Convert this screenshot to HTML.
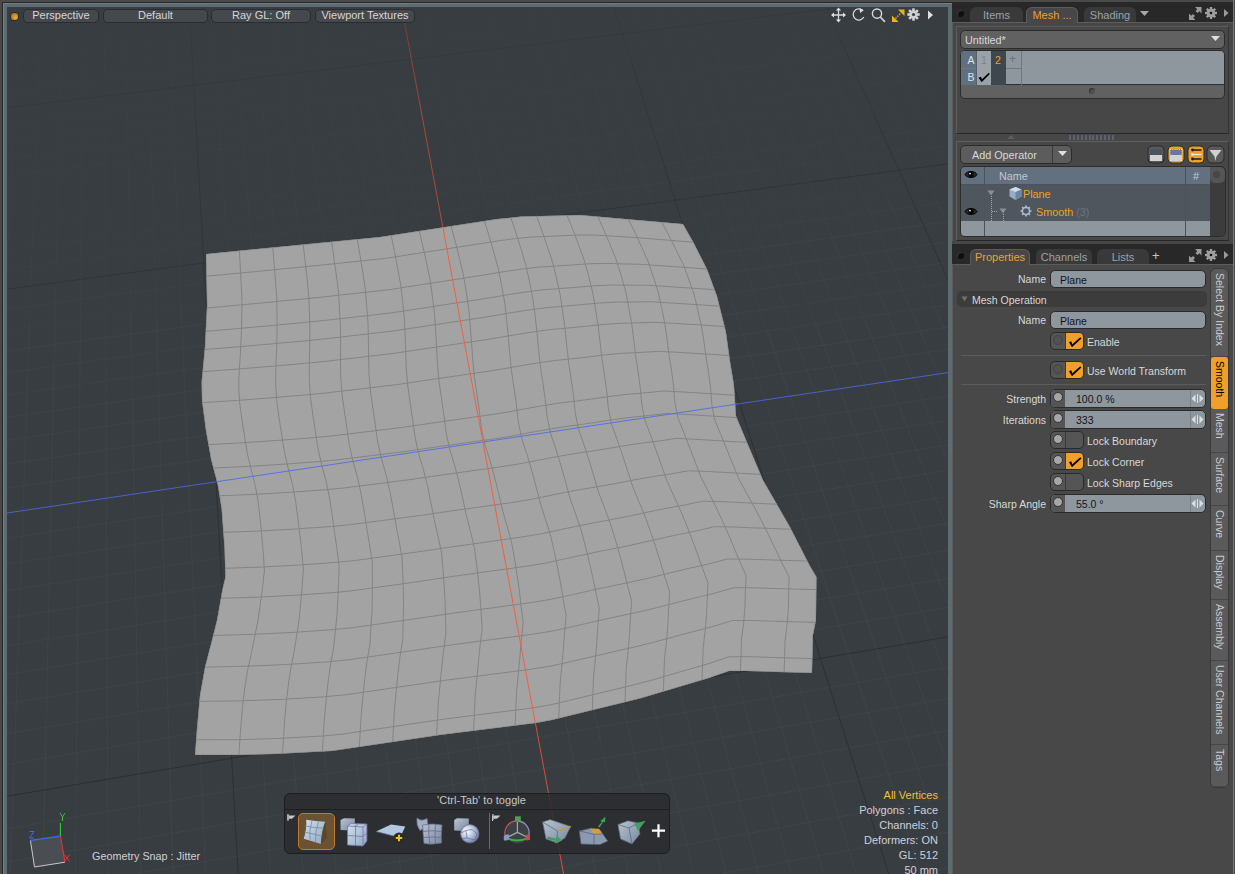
<!DOCTYPE html><html><head><meta charset="utf-8"><style>
*{margin:0;padding:0;box-sizing:border-box}
html,body{width:1235px;height:874px;overflow:hidden;background:#474747;font-family:"Liberation Sans",sans-serif;font-size:11px;color:#d8d8d8}
.a{position:absolute}
.t{position:absolute;white-space:nowrap;line-height:13px}
</style></head><body>
<div class="a" style="left:0;top:0;width:1235px;height:2px;background:#4a4a4a"></div>
<div class="a" style="left:0;top:2px;width:2px;height:872px;background:#484848"></div>
<div class="a" style="left:2px;top:2px;width:950px;height:1px;background:#262626"></div>
<div class="a" style="left:2px;top:2px;width:1px;height:872px;background:#262626"></div>
<div class="a" style="left:3px;top:3px;width:949px;height:871px;background:#5e6b73;border-top:1px solid #72808a;border-left:1px solid #72808a"></div>
<div class="a" style="left:7px;top:7px;width:941px;height:867px;background:#383d42;overflow:hidden">
<svg width="941" height="867" viewBox="7 7 941 867" style="position:absolute;left:0;top:0">
<path d="M-2127.1 1488.8L-1720.1 919.9M-2080.1 1479.9L-1682.6 914.0M-2033.3 1471.0L-1645.3 908.0M-1986.8 1462.2L-1608.1 902.1M-1940.5 1453.4L-1571.2 896.3M-1894.6 1444.7L-1534.4 890.4M-1848.9 1436.0L-1497.8 884.6M-1803.4 1427.4L-1461.3 878.8M-1758.2 1418.8L-1425.0 873.1M-1668.6 1401.8L-1353.0 861.7M-1624.2 1393.3L-1317.2 856.0M-1580.0 1384.9L-1281.6 850.3M-1536.1 1376.6L-1246.2 844.7M-1492.4 1368.3L-1210.9 839.1M-1449.0 1360.0L-1175.8 833.5M-1405.8 1351.8L-1140.9 828.0M-1362.9 1343.7L-1106.1 822.5M-1320.2 1335.6L-1071.5 817.0M-1235.5 1319.5L-1002.7 806.1M-1193.5 1311.5L-968.5 800.6M-1151.7 1303.6L-934.5 795.2M-1110.2 1295.7L-900.7 789.9M-1068.8 1287.8L-867.0 784.5M-1027.7 1280.0L-833.4 779.2M-986.9 1272.3L-800.0 773.9M-946.2 1264.5L-766.8 768.6M-905.8 1256.9L-733.7 763.4M-825.6 1241.6L-668.0 752.9M-785.8 1234.1L-635.3 747.8M-746.3 1226.6L-602.8 742.6M-706.9 1219.1L-570.4 737.5M-667.8 1211.6L-538.2 732.3M-628.8 1204.2L-506.1 727.3M-590.1 1196.9L-474.2 722.2M-551.6 1189.6L-442.4 717.1M-513.2 1182.3L-410.8 712.1M-437.2 1167.9L-347.9 702.1M-399.5 1160.7L-316.6 697.2M-361.9 1153.6L-285.5 692.2M-324.6 1146.5L-254.5 687.3M-287.5 1139.4L-223.7 682.4M-250.5 1132.4L-193.0 677.6M-213.8 1125.4L-162.4 672.7M-177.2 1118.5L-132.0 667.9M-140.8 1111.6L-101.6 663.1M-68.6 1097.8L-41.4 653.5M-32.8 1091.0L-11.5 648.8M2.9 1084.3L18.3 644.0M38.3 1077.5L48.0 639.3M73.6 1070.8L77.5 634.6M108.7 1064.2L107.0 630.0M143.7 1057.5L136.3 625.3M178.4 1050.9L165.4 620.7M213.0 1044.3L194.5 616.1M281.7 1031.3L252.2 606.9M315.7 1024.8L280.9 602.3M349.6 1018.4L309.5 597.8M383.4 1012.0L338.0 593.3M416.9 1005.6L366.3 588.8M450.3 999.3L394.5 584.3M483.6 993.0L422.6 579.9M516.7 986.7L450.6 575.4M549.6 980.4L478.5 571.0M614.9 968.0L533.9 562.2M647.4 961.8L561.4 557.8M679.7 955.7L588.8 553.5M711.8 949.6L616.1 549.2M743.7 943.5L643.3 544.8M775.6 937.5L670.4 540.5M807.2 931.5L697.4 536.3M838.7 925.5L724.3 532.0M870.1 919.5L751.0 527.7M932.4 907.7L804.2 519.3M963.3 901.8L830.6 515.1M994.1 896.0L857.0 510.9M1024.7 890.2L883.2 506.8M1055.2 884.4L909.3 502.6M1085.6 878.6L935.3 498.5M1115.8 872.9L961.3 494.4M1145.8 867.2L987.1 490.3M1175.7 861.5L1012.8 486.2M1235.2 850.2L1063.9 478.1M1264.7 844.6L1089.3 474.1M1294.0 839.0L1114.6 470.0M1323.3 833.5L1139.8 466.0M1352.4 827.9L1165.0 462.1M1381.4 822.4L1190.0 458.1M1410.2 816.9L1214.9 454.1M1438.9 811.5L1239.7 450.2M1467.5 806.1L1264.4 446.3M1524.2 795.3L1313.6 438.5M1552.4 789.9L1338.0 434.6M1580.5 784.6L1362.4 430.7M1608.4 779.3L1386.6 426.9M1636.2 774.0L1410.8 423.0M1663.9 768.8L1434.9 419.2M1691.5 763.5L1458.8 415.4M1718.9 758.3L1482.7 411.6M1746.2 753.1L1506.5 407.8M1800.5 742.8L1553.8 400.3M1827.5 737.7L1577.4 396.6M1854.3 732.6L1600.8 392.9M1881.0 727.5L1624.1 389.2M1907.6 722.5L1647.4 385.5M1934.1 717.4L1670.6 381.8M1960.5 712.4L1693.7 378.1M1986.8 707.4L1716.7 374.5M2012.9 702.5L1739.6 370.9M2064.8 692.6L1785.2 363.6M2090.7 687.7L1807.8 360.0M2116.3 682.8L1830.4 356.5M2141.9 678.0L1852.9 352.9M2167.4 673.1L1875.3 349.3M2192.8 668.3L1897.6 345.8M2218.0 663.5L1919.9 342.3M2243.2 658.7L1942.0 338.7M2268.2 654.0L1964.1 335.2M2318.0 644.5L2008.0 328.3M2342.7 639.8L2029.9 324.8M2367.3 635.1L2051.6 321.3M2391.8 630.5L2073.3 317.9M2416.2 625.9L2094.9 314.5M2440.6 621.2L2116.5 311.1M2464.8 616.6L2137.9 307.6M2488.9 612.1L2159.3 304.3M2512.9 607.5L2180.6 300.9M-2174.4 1497.8L2536.8 603.0M-2135.9 1444.9L2507.3 576.0M-2098.6 1393.7L2478.5 549.8M-2062.5 1344.2L2450.4 524.1M-2027.6 1296.3L2422.9 499.1M-1993.8 1249.9L2396.1 474.6M-1961.0 1204.9L2369.8 450.7M-1929.3 1161.4L2344.2 427.4M-1868.7 1078.2L2294.6 382.2M-1839.7 1038.4L2270.7 360.3M-1811.6 999.8L2247.2 338.9M-1784.3 962.3L2224.3 318.0" stroke="#4c5257" stroke-opacity="0.330" stroke-width="1" fill="none"/>
<path d="M-2174.4 1497.8L-1757.7 925.9M-1713.3 1410.2L-1388.9 867.4M-1277.7 1327.5L-1037.0 811.5M-865.6 1249.2L-700.8 758.1M-475.1 1175.1L-379.2 707.1M-104.6 1104.7L-71.5 658.3M247.4 1037.8L223.4 611.5M901.3 913.6L777.7 523.5M1205.5 855.8L1038.4 482.1M1495.9 800.7L1289.1 442.4M1773.4 747.9L1530.2 404.1M2038.9 697.5L1762.4 367.2M2293.1 649.2L1986.1 331.7M2536.8 603.0L2201.8 297.5M-1898.6 1119.2L2319.1 404.5" stroke="#25282b" stroke-opacity="0.620" stroke-width="1" fill="none"/>
<path d="M-1720.1 919.9L-1536.1 662.8M-1682.6 914.0L-1502.8 658.0M-1645.3 908.0L-1469.6 653.2M-1608.1 902.1L-1436.6 648.5M-1571.2 896.3L-1403.7 643.7M-1534.4 890.4L-1371.0 639.0M-1497.8 884.6L-1338.4 634.3M-1461.3 878.8L-1305.9 629.6M-1425.0 873.1L-1273.6 625.0M-1353.0 861.7L-1209.3 615.7M-1317.2 856.0L-1177.4 611.1M-1281.6 850.3L-1145.6 606.5M-1246.2 844.7L-1113.9 602.0M-1210.9 839.1L-1082.4 597.4M-1175.8 833.5L-1051.0 592.9M-1140.9 828.0L-1019.7 588.4M-1106.1 822.5L-988.6 583.9M-1071.5 817.0L-957.5 579.5M-1002.7 806.1L-895.9 570.6M-968.5 800.6L-865.3 566.2M-934.5 795.2L-834.8 561.8M-900.7 789.9L-804.4 557.4M-867.0 784.5L-774.1 553.0M-833.4 779.2L-744.0 548.7M-800.0 773.9L-714.0 544.4M-766.8 768.6L-684.1 540.1M-733.7 763.4L-654.3 535.8M-668.0 752.9L-595.2 527.3M-635.3 747.8L-565.8 523.0M-602.8 742.6L-536.5 518.8M-570.4 737.5L-507.3 514.6M-538.2 732.3L-478.2 510.4M-506.1 727.3L-449.3 506.2M-474.2 722.2L-420.5 502.1M-442.4 717.1L-391.8 498.0M-410.8 712.1L-363.2 493.8M-347.9 702.1L-306.3 485.6M-316.6 697.2L-278.1 481.6M-285.5 692.2L-249.9 477.5M-254.5 687.3L-221.9 473.5M-223.7 682.4L-194.0 469.5M-193.0 677.6L-166.1 465.5M-162.4 672.7L-138.4 461.5M-132.0 667.9L-110.8 457.5M-101.6 663.1L-83.3 453.5M-41.4 653.5L-28.7 445.7M-11.5 648.8L-1.5 441.7M18.3 644.0L25.6 437.8M48.0 639.3L52.5 434.0M77.5 634.6L79.4 430.1M107.0 630.0L106.1 426.2M136.3 625.3L132.8 422.4M165.4 620.7L159.3 418.6M194.5 616.1L185.8 414.8M252.2 606.9L238.4 407.2M280.9 602.3L264.5 403.4M309.5 597.8L290.6 399.7M338.0 593.3L316.6 395.9M366.3 588.8L342.4 392.2M394.5 584.3L368.2 388.5M422.6 579.9L393.8 384.8M450.6 575.4L419.4 381.1M478.5 571.0L444.9 377.4M533.9 562.2L495.5 370.2M561.4 557.8L520.7 366.5M588.8 553.5L545.8 362.9M616.1 549.2L570.8 359.3M643.3 544.8L595.7 355.7M670.4 540.5L620.5 352.1M697.4 536.3L645.2 348.6M724.3 532.0L669.9 345.0M751.0 527.7L694.4 341.5M804.2 519.3L743.2 334.5M830.6 515.1L767.5 331.0M857.0 510.9L791.7 327.5M883.2 506.8L815.7 324.0M909.3 502.6L839.8 320.6M935.3 498.5L863.7 317.1M961.3 494.4L887.5 313.7M987.1 490.3L911.3 310.3M1012.8 486.2L934.9 306.9M1063.9 478.1L982.0 300.1M1089.3 474.1L1005.4 296.7M1114.6 470.0L1028.7 293.3M1139.8 466.0L1051.9 290.0M1165.0 462.1L1075.1 286.7M1190.0 458.1L1098.2 283.3M1214.9 454.1L1121.2 280.0M1239.7 450.2L1144.1 276.7M1264.4 446.3L1166.9 273.4M1313.6 438.5L1212.3 266.9M1338.0 434.6L1234.9 263.6M1362.4 430.7L1257.4 260.4M1386.6 426.9L1279.8 257.2M1410.8 423.0L1302.2 254.0M1434.9 419.2L1324.5 250.7M1458.8 415.4L1346.6 247.6M1482.7 411.6L1368.8 244.4M1506.5 407.8L1390.8 241.2M1553.8 400.3L1434.6 234.9M1577.4 396.6L1456.5 231.7M1600.8 392.9L1478.2 228.6M1624.1 389.2L1499.8 225.5M1647.4 385.5L1521.4 222.4M1670.6 381.8L1542.9 219.3M1693.7 378.1L1564.4 216.2M1716.7 374.5L1585.7 213.1M1739.6 370.9L1607.0 210.0M1785.2 363.6L1649.4 203.9M1807.8 360.0L1670.5 200.9M1830.4 356.5L1691.5 197.9M1852.9 352.9L1712.4 194.9M1875.3 349.3L1733.2 191.9M1897.6 345.8L1754.0 188.9M1919.9 342.3L1774.8 185.9M1942.0 338.7L1795.4 182.9M1964.1 335.2L1816.0 179.9M2008.0 328.3L1856.9 174.1M2029.9 324.8L1877.3 171.1M2051.6 321.3L1897.6 168.2M2073.3 317.9L1917.8 165.3M2094.9 314.5L1938.0 162.4M2116.5 311.1L1958.1 159.5M2137.9 307.6L1978.1 156.6M2159.3 304.3L1998.1 153.7M2180.6 300.9L2018.0 150.8M-1757.7 925.9L2201.8 297.5M-1731.9 890.5L2179.8 277.5M-1706.8 856.0L2158.3 257.8M-1682.4 822.5L2137.2 238.6M-1658.6 789.8L2116.5 219.7M-1613.0 727.1L2076.4 183.1M-1591.0 697.0L2056.9 165.4" stroke="#4c5257" stroke-opacity="0.320" stroke-width="1" fill="none"/>
<path d="M-1757.7 925.9L-1569.6 667.6M-1388.9 867.4L-1241.4 620.3M-1037.0 811.5L-926.7 575.0M-700.8 758.1L-624.7 531.5M-379.2 707.1L-334.7 489.7M-71.5 658.3L-56.0 449.6M223.4 611.5L212.1 411.0M777.7 523.5L718.8 338.0M1038.4 482.1L958.5 303.5M1289.1 442.4L1189.6 270.2M1530.2 404.1L1412.8 238.0M1762.4 367.2L1628.2 207.0M1986.1 331.7L1836.5 177.0M2201.8 297.5L2037.8 148.0" stroke="#25282b" stroke-opacity="0.601" stroke-width="1" fill="none"/>
<path d="M-1536.1 662.8L-1438.9 526.9M-1502.8 658.0L-1407.8 522.7M-1469.6 653.2L-1376.8 518.5M-1436.6 648.5L-1345.9 514.3M-1403.7 643.7L-1315.1 510.1M-1371.0 639.0L-1284.5 505.9M-1338.4 634.3L-1254.0 501.8M-1305.9 629.6L-1223.6 497.6M-1273.6 625.0L-1193.3 493.5M-1209.3 615.7L-1133.1 485.3M-1177.4 611.1L-1103.2 481.2M-1145.6 606.5L-1073.4 477.2M-1113.9 602.0L-1043.7 473.1M-1082.4 597.4L-1014.1 469.1M-1051.0 592.9L-984.6 465.1M-1019.7 588.4L-955.3 461.1M-988.6 583.9L-926.1 457.1M-957.5 579.5L-897.0 453.2M-895.9 570.6L-839.1 445.3M-865.3 566.2L-810.3 441.4M-834.8 561.8L-781.7 437.5M-804.4 557.4L-753.1 433.6M-774.1 553.0L-724.7 429.7M-744.0 548.7L-696.3 425.8M-714.0 544.4L-668.1 422.0M-684.1 540.1L-640.0 418.2M-654.3 535.8L-612.0 414.4M-595.2 527.3L-556.3 406.8M-565.8 523.0L-528.6 403.0M-536.5 518.8L-501.0 399.2M-507.3 514.6L-473.6 395.5M-478.2 510.4L-446.2 391.8M-449.3 506.2L-418.9 388.1M-420.5 502.1L-391.7 384.4M-391.8 498.0L-364.7 380.7M-363.2 493.8L-337.7 377.0M-306.3 485.6L-284.1 369.7M-278.1 481.6L-257.4 366.1M-249.9 477.5L-230.9 362.5M-221.9 473.5L-204.4 358.9M-194.0 469.5L-178.0 355.3M-166.1 465.5L-151.8 351.7M-138.4 461.5L-125.6 348.1M-110.8 457.5L-99.5 344.6M-83.3 453.5L-73.5 341.0M-28.7 445.7L-21.9 334.0M-1.5 441.7L3.8 330.5M25.6 437.8L29.4 327.0M52.5 434.0L55.0 323.5M79.4 430.1L80.4 320.1M106.1 426.2L105.7 316.6M132.8 422.4L130.9 313.2M159.3 418.6L156.1 309.8M185.8 414.8L181.1 306.4M238.4 407.2L230.9 299.6M264.5 403.4L255.7 296.2M290.6 399.7L280.4 292.8M316.6 395.9L305.0 289.5M342.4 392.2L329.5 286.2M368.2 388.5L353.9 282.8M393.8 384.8L378.3 279.5M419.4 381.1L402.5 276.2M444.9 377.4L426.7 272.9M495.5 370.2L474.8 266.4M520.7 366.5L498.7 263.1M545.8 362.9L522.5 259.9M570.8 359.3L546.3 256.6M595.7 355.7L569.9 253.4M620.5 352.1L593.5 250.2M645.2 348.6L617.0 247.0M669.9 345.0L640.4 243.8M694.4 341.5L663.7 240.7M743.2 334.5L710.1 234.3M767.5 331.0L733.2 231.2M791.7 327.5L756.2 228.1M815.7 324.0L779.2 224.9M839.8 320.6L802.0 221.8M863.7 317.1L824.8 218.7M887.5 313.7L847.5 215.6M911.3 310.3L870.1 212.6M934.9 306.9L892.6 209.5M982.0 300.1L937.5 203.4M1005.4 296.7L959.8 200.3M1028.7 293.3L982.0 197.3M1051.9 290.0L1004.2 194.3M1075.1 286.7L1026.2 191.3M1098.2 283.3L1048.2 188.3M1121.2 280.0L1070.2 185.3M1144.1 276.7L1092.0 182.3M1166.9 273.4L1113.8 179.4M1212.3 266.9L1157.2 173.5M1234.9 263.6L1178.7 170.5M1257.4 260.4L1200.2 167.6M1279.8 257.2L1221.6 164.7M1302.2 254.0L1243.0 161.8M1324.5 250.7L1264.3 158.9M1346.6 247.6L1285.5 156.0M1368.8 244.4L1306.6 153.1M1390.8 241.2L1327.7 150.3M1434.6 234.9L1369.6 144.5M1456.5 231.7L1390.4 141.7M1478.2 228.6L1411.2 138.9M1499.8 225.5L1431.9 136.1M1521.4 222.4L1452.6 133.2M1542.9 219.3L1473.2 130.4M1564.4 216.2L1493.7 127.6M1585.7 213.1L1514.1 124.9M1607.0 210.0L1534.5 122.1M1649.4 203.9L1575.1 116.6M1670.5 200.9L1595.3 113.8M1691.5 197.9L1615.4 111.1M1712.4 194.9L1635.5 108.3M1733.2 191.9L1655.4 105.6M1754.0 188.9L1675.4 102.9M1774.8 185.9L1695.2 100.2M1795.4 182.9L1715.0 97.5M1816.0 179.9L1734.8 94.8M1856.9 174.1L1774.0 89.5M1877.3 171.1L1793.6 86.8M1897.6 168.2L1813.1 84.2M1917.8 165.3L1832.5 81.5M1938.0 162.4L1851.9 78.9M1958.1 159.5L1871.1 76.3M1978.1 156.6L1890.4 73.6M1998.1 153.7L1909.6 71.0M2018.0 150.8L1928.7 68.4M-1569.6 667.6L2037.8 148.0M-1548.7 639.0L2019.1 130.9M-1528.4 611.0L2000.8 114.2M-1508.5 583.8L1982.7 97.8M-1489.1 557.2L1965.1 81.6" stroke="#4c5257" stroke-opacity="0.253" stroke-width="1" fill="none"/>
<path d="M-1569.6 667.6L-1470.2 531.2M-1241.4 620.3L-1163.1 489.4M-926.7 575.0L-868.0 449.2M-624.7 531.5L-584.1 410.6M-334.7 489.7L-310.9 373.3M-56.0 449.6L-47.6 337.5M212.1 411.0L206.1 303.0M718.8 338.0L687.0 237.5M958.5 303.5L915.1 206.4M1189.6 270.2L1135.5 176.4M1412.8 238.0L1348.7 147.4M1628.2 207.0L1554.8 119.3M1836.5 177.0L1754.4 92.1M2037.8 148.0L1947.7 65.8" stroke="#25282b" stroke-opacity="0.475" stroke-width="1" fill="none"/>
<path d="M-1438.9 526.9L-1352.7 406.4M-1407.8 522.7L-1323.4 402.6M-1376.8 518.5L-1294.3 398.8M-1345.9 514.3L-1265.3 395.1M-1315.1 510.1L-1236.4 391.3M-1284.5 505.9L-1207.6 387.6M-1254.0 501.8L-1178.9 383.9M-1223.6 497.6L-1150.4 380.2M-1193.3 493.5L-1121.9 376.6M-1133.1 485.3L-1065.3 369.3M-1103.2 481.2L-1037.1 365.6M-1073.4 477.2L-1009.1 362.0M-1043.7 473.1L-981.1 358.4M-1014.1 469.1L-953.3 354.8M-984.6 465.1L-925.6 351.2M-955.3 461.1L-897.9 347.7M-926.1 457.1L-870.4 344.1M-897.0 453.2L-843.0 340.6M-839.1 445.3L-788.4 333.5M-810.3 441.4L-761.3 330.0M-781.7 437.5L-734.3 326.5M-753.1 433.6L-707.4 323.1M-724.7 429.7L-680.5 319.6M-696.3 425.8L-653.8 316.1M-668.1 422.0L-627.2 312.7M-640.0 418.2L-600.6 309.3M-612.0 414.4L-574.2 305.9M-556.3 406.8L-521.6 299.1M-528.6 403.0L-495.4 295.7M-501.0 399.2L-469.4 292.3M-473.6 395.5L-443.4 289.0M-446.2 391.8L-417.5 285.6M-418.9 388.1L-391.7 282.3M-391.7 384.4L-366.0 279.0M-364.7 380.7L-340.4 275.7M-337.7 377.0L-314.9 272.4M-284.1 369.7L-264.2 265.9M-257.4 366.1L-238.9 262.6M-230.9 362.5L-213.8 259.4M-204.4 358.9L-188.7 256.1M-178.0 355.3L-163.7 252.9M-151.8 351.7L-138.9 249.7M-125.6 348.1L-114.1 246.5M-99.5 344.6L-89.3 243.3M-73.5 341.0L-64.7 240.1M-21.9 334.0L-15.7 233.8M3.8 330.5L8.7 230.6M29.4 327.0L32.9 227.5M55.0 323.5L57.1 224.4M80.4 320.1L81.3 221.3M105.7 316.6L105.3 218.2M130.9 313.2L129.2 215.1M156.1 309.8L153.1 212.0M181.1 306.4L176.9 208.9M230.9 299.6L224.2 202.8M255.7 296.2L247.8 199.8M280.4 292.8L271.2 196.8M305.0 289.5L294.6 193.7M329.5 286.2L317.9 190.7M353.9 282.8L341.2 187.7M378.3 279.5L364.3 184.7M402.5 276.2L387.4 181.8M426.7 272.9L410.4 178.8M474.8 266.4L456.1 172.9M498.7 263.1L478.9 170.0M522.5 259.9L501.6 167.0M546.3 256.6L524.2 164.1M569.9 253.4L546.7 161.2M593.5 250.2L569.1 158.3M617.0 247.0L591.5 155.4M640.4 243.8L613.8 152.5M663.7 240.7L636.1 149.7M710.1 234.3L680.3 144.0M733.2 231.2L702.3 141.1M756.2 228.1L724.3 138.3M779.2 224.9L746.1 135.5M802.0 221.8L767.9 132.6M824.8 218.7L789.7 129.8M847.5 215.6L811.3 127.0M870.1 212.6L832.9 124.3M892.6 209.5L854.4 121.5M937.5 203.4L897.2 116.0M959.8 200.3L918.5 113.2M982.0 197.3L939.8 110.5M1004.2 194.3L960.9 107.7M1026.2 191.3L982.0 105.0M1048.2 188.3L1003.1 102.3M1070.2 185.3L1024.0 99.6M1092.0 182.3L1044.9 96.9M1113.8 179.4L1065.7 94.2M1157.2 173.5L1107.2 88.9M1178.7 170.5L1127.8 86.2M1200.2 167.6L1148.4 83.5M1221.6 164.7L1168.9 80.9M1243.0 161.8L1189.3 78.3M1264.3 158.9L1209.7 75.6M1285.5 156.0L1230.0 73.0M1306.6 153.1L1250.2 70.4M1327.7 150.3L1270.4 67.8M1369.6 144.5L1310.6 62.6M1390.4 141.7L1330.5 60.0M1411.2 138.9L1350.5 57.5M1431.9 136.1L1370.3 54.9M1452.6 133.2L1390.1 52.3M1473.2 130.4L1409.8 49.8M1493.7 127.6L1429.5 47.2M1514.1 124.9L1449.1 44.7M1534.5 122.1L1468.7 42.2M1575.1 116.6L1507.6 37.2M1595.3 113.8L1527.0 34.7M1615.4 111.1L1546.3 32.2M1635.5 108.3L1565.5 29.7M1655.4 105.6L1584.7 27.2M1675.4 102.9L1603.8 24.7M1695.2 100.2L1622.9 22.3M1715.0 97.5L1641.9 19.8M1734.8 94.8L1660.9 17.4M1774.0 89.5L1698.6 12.5M1793.6 86.8L1717.4 10.1M1813.1 84.2L1736.1 7.7M1832.5 81.5L1754.8 5.3M1851.9 78.9L1773.4 2.9M1871.1 76.3L1792.0 0.5M1890.4 73.6L1810.5 -1.9M1909.6 71.0L1828.9 -4.3M1928.7 68.4L1847.3 -6.7M-1470.2 531.2L1947.7 65.8M-1451.7 505.8L1930.7 50.3M-1416.1 456.9L1897.6 20.1M-1398.8 433.2L1881.5 5.4" stroke="#4c5257" stroke-opacity="0.201" stroke-width="1" fill="none"/>
<path d="M-1470.2 531.2L-1382.0 410.1M-1163.1 489.4L-1093.5 372.9M-868.0 449.2L-815.7 337.0M-584.1 410.6L-547.8 302.5M-310.9 373.3L-289.5 269.1M-47.6 337.5L-40.2 236.9M206.1 303.0L200.6 205.9M687.0 237.5L658.2 146.8M915.1 206.4L875.9 118.7M1135.5 176.4L1086.5 91.5M1348.7 147.4L1290.5 65.2M1554.8 119.3L1488.2 39.7M1754.4 92.1L1679.8 14.9M1947.7 65.8L1865.6 -9.0M-1433.7 481.1L1914.0 35.1" stroke="#25282b" stroke-opacity="0.378" stroke-width="1" fill="none"/>
<path d="M-1352.7 406.4L-1275.6 298.6M-1323.4 402.6L-1248.0 295.2M-1294.3 398.8L-1220.6 291.8M-1265.3 395.1L-1193.2 288.5M-1236.4 391.3L-1166.0 285.1M-1207.6 387.6L-1138.8 281.8M-1178.9 383.9L-1111.8 278.5M-1150.4 380.2L-1084.8 275.2M-1121.9 376.6L-1058.0 271.9M-1065.3 369.3L-1004.5 265.3M-1037.1 365.6L-978.0 262.1M-1009.1 362.0L-951.5 258.8M-981.1 358.4L-925.1 255.6M-953.3 354.8L-898.8 252.4M-925.6 351.2L-872.6 249.1M-897.9 347.7L-846.5 245.9M-870.4 344.1L-820.5 242.8M-843.0 340.6L-794.5 239.6M-788.4 333.5L-743.0 233.2M-761.3 330.0L-717.3 230.1M-734.3 326.5L-691.7 227.0M-707.4 323.1L-666.3 223.8M-680.5 319.6L-640.9 220.7M-653.8 316.1L-615.6 217.6M-627.2 312.7L-590.3 214.5M-600.6 309.3L-565.2 211.4M-574.2 305.9L-540.2 208.4M-521.6 299.1L-490.3 202.3M-495.4 295.7L-465.6 199.2M-469.4 292.3L-440.9 196.2M-443.4 289.0L-416.2 193.2M-417.5 285.6L-391.7 190.2M-391.7 282.3L-367.2 187.2M-366.0 279.0L-342.9 184.2M-340.4 275.7L-318.6 181.2M-314.9 272.4L-294.4 178.2M-264.2 265.9L-246.2 172.3M-238.9 262.6L-222.3 169.4M-213.8 259.4L-198.4 166.4M-188.7 256.1L-174.6 163.5M-163.7 252.9L-150.9 160.6M-138.9 249.7L-127.2 157.7M-114.1 246.5L-103.7 154.8M-89.3 243.3L-80.2 151.9M-64.7 240.1L-56.8 149.1M-15.7 233.8L-10.2 143.4M8.7 230.6L13.0 140.5M32.9 227.5L36.1 137.7M57.1 224.4L59.1 134.9M81.3 221.3L82.1 132.0M105.3 218.2L104.9 129.2M129.2 215.1L127.7 126.4M153.1 212.0L150.4 123.6M176.9 208.9L173.1 120.9M224.2 202.8L218.2 115.3M247.8 199.8L240.6 112.6M271.2 196.8L262.9 109.8M294.6 193.7L285.2 107.1M317.9 190.7L307.4 104.4M341.2 187.7L329.6 101.7M364.3 184.7L351.6 99.0M387.4 181.8L373.6 96.3M410.4 178.8L395.6 93.6M456.1 172.9L439.2 88.2M478.9 170.0L460.9 85.6M501.6 167.0L482.6 82.9M524.2 164.1L504.1 80.3M546.7 161.2L525.6 77.6M569.1 158.3L547.1 75.0M591.5 155.4L568.4 72.4M613.8 152.5L589.8 69.8M636.1 149.7L611.0 67.1M680.3 144.0L653.3 62.0M702.3 141.1L674.3 59.4M724.3 138.3L695.3 56.8M746.1 135.5L716.2 54.2M767.9 132.6L737.0 51.7M789.7 129.8L757.8 49.1M811.3 127.0L778.5 46.6M832.9 124.3L799.1 44.1M854.4 121.5L819.7 41.5M897.2 116.0L860.7 36.5M918.5 113.2L881.1 34.0M939.8 110.5L901.4 31.5M960.9 107.7L921.6 29.0M982.0 105.0L941.8 26.6M1003.1 102.3L962.0 24.1M1024.0 99.6L982.1 21.6M1044.9 96.9L1002.1 19.2M1065.7 94.2L1022.0 16.7M1107.2 88.9L1061.7 11.9M1127.8 86.2L1081.5 9.4M1148.4 83.5L1101.2 7.0M1168.9 80.9L1120.9 4.6M1189.3 78.3L1140.5 2.2M1209.7 75.6L1160.0 -0.2M1230.0 73.0L1179.5 -2.6M1250.2 70.4L1198.9 -5.0M1270.4 67.8L1218.2 -7.3M1310.6 62.6L1256.8 -12.1M1330.5 60.0L1275.9 -14.4M1350.5 57.5L1295.1 -16.8M1370.3 54.9L1314.1 -19.1M1390.1 52.3L1333.1 -21.4M1409.8 49.8L1352.1 -23.8M1429.5 47.2L1371.0 -26.1M1449.1 44.7L1389.8 -28.4M1468.7 42.2L1408.6 -30.7M1507.6 37.2L1446.0 -35.3M1527.0 34.7L1464.6 -37.6M1546.3 32.2L1483.2 -39.8M1565.5 29.7L1501.7 -42.1M1584.7 27.2L1520.1 -44.4M1603.8 24.7L1538.5 -46.6M1622.9 22.3L1556.9 -48.9M1641.9 19.8L1575.2 -51.1M1660.9 17.4L1593.4 -53.4M1698.6 12.5L1629.7 -57.8M1717.4 10.1L1647.8 -60.0M1736.1 7.7L1665.8 -62.2M1754.8 5.3L1683.8 -64.5M1773.4 2.9L1701.7 -66.7M1792.0 0.5L1719.5 -68.8M1810.5 -1.9L1737.4 -71.0M1828.9 -4.3L1755.1 -73.2M1847.3 -6.7L1772.8 -75.4M-1382.0 410.1L1865.6 -9.0M-1365.5 387.5L1850.1 -23.2M-1349.4 365.4L1834.8 -37.2M-1333.7 343.8L1819.8 -50.9M-1318.3 322.7L1805.0 -64.3" stroke="#4c5257" stroke-opacity="0.150" stroke-width="1" fill="none"/>
<path d="M-1382.0 410.1L-1303.2 302.0M-1093.5 372.9L-1031.2 268.6M-815.7 337.0L-768.7 236.4M-547.8 302.5L-515.2 205.3M-289.5 269.1L-270.3 175.3M-40.2 236.9L-33.4 146.2M200.6 205.9L195.7 118.1M658.2 146.8L632.2 64.6M875.9 118.7L840.2 39.0M1086.5 91.5L1041.9 14.3M1290.5 65.2L1237.5 -9.7M1488.2 39.7L1427.3 -33.0M1679.8 14.9L1611.6 -55.6M1865.6 -9.0L1790.5 -77.5" stroke="#25282b" stroke-opacity="0.281" stroke-width="1" fill="none"/>
<path d="M-1275.6 298.6L-1193.2 183.5M-1248.0 295.2L-1167.5 180.5M-1220.6 291.8L-1141.8 177.5M-1193.2 288.5L-1116.2 174.6M-1166.0 285.1L-1090.7 171.6M-1138.8 281.8L-1065.3 168.7M-1111.8 278.5L-1040.0 165.7M-1084.8 275.2L-1014.8 162.8M-1058.0 271.9L-989.6 159.9M-1004.5 265.3L-939.5 154.1M-978.0 262.1L-914.6 151.2M-951.5 258.8L-889.8 148.3M-925.1 255.6L-865.1 145.5M-898.8 252.4L-840.4 142.6M-872.6 249.1L-815.9 139.8M-846.5 245.9L-791.4 137.0M-820.5 242.8L-767.0 134.1M-794.5 239.6L-742.6 131.3M-743.0 233.2L-694.2 125.7M-717.3 230.1L-670.1 122.9M-691.7 227.0L-646.1 120.1M-666.3 223.8L-622.2 117.4M-640.9 220.7L-598.3 114.6M-615.6 217.6L-574.5 111.8M-590.3 214.5L-550.8 109.1M-565.2 211.4L-527.2 106.4M-540.2 208.4L-503.7 103.6M-490.3 202.3L-456.8 98.2M-465.6 199.2L-433.5 95.5M-440.9 196.2L-410.2 92.8M-416.2 193.2L-387.0 90.1M-391.7 190.2L-363.9 87.5M-367.2 187.2L-340.9 84.8M-342.9 184.2L-318.0 82.1M-318.6 181.2L-295.1 79.5M-294.4 178.2L-272.3 76.9M-246.2 172.3L-226.9 71.6M-222.3 169.4L-204.3 69.0M-198.4 166.4L-181.8 66.4M-174.6 163.5L-159.4 63.8M-150.9 160.6L-137.0 61.2M-127.2 157.7L-114.7 58.6M-103.7 154.8L-92.5 56.0M-80.2 151.9L-70.3 53.5M-56.8 149.1L-48.2 50.9M-10.2 143.4L-4.2 45.8M13.0 140.5L17.7 43.3M36.1 137.7L39.5 40.8M59.1 134.9L61.2 38.2M82.1 132.0L82.9 35.7M104.9 129.2L104.5 33.2M127.7 126.4L126.1 30.7M150.4 123.6L147.6 28.3M173.1 120.9L169.0 25.8M218.2 115.3L211.6 20.8M240.6 112.6L232.8 18.4M262.9 109.8L254.0 15.9M285.2 107.1L275.1 13.5M307.4 104.4L296.1 11.1M329.6 101.7L317.1 8.6M351.6 99.0L338.0 6.2M373.6 96.3L358.8 3.8M395.6 93.6L379.5 1.4M439.2 88.2L420.9 -3.4M460.9 85.6L441.5 -5.8M482.6 82.9L462.0 -8.1M504.1 80.3L482.5 -10.5M525.6 77.6L502.8 -12.9M547.1 75.0L523.2 -15.2M568.4 72.4L543.4 -17.6M589.8 69.8L563.7 -19.9M611.0 67.1L583.8 -22.3M653.3 62.0L623.9 -26.9M674.3 59.4L643.9 -29.2M695.3 56.8L663.8 -31.5M716.2 54.2L683.7 -33.8M737.0 51.7L703.5 -36.1M757.8 49.1L723.2 -38.4M778.5 46.6L742.9 -40.7M799.1 44.1L762.5 -42.9M819.7 41.5L782.0 -45.2M860.7 36.5L821.0 -49.7M881.1 34.0L840.4 -52.0M901.4 31.5L859.7 -54.2M921.6 29.0L879.0 -56.4M941.8 26.6L898.2 -58.6M962.0 24.1L917.4 -60.9M982.1 21.6L936.5 -63.1M1002.1 19.2L955.5 -65.3M1022.0 16.7L974.5 -67.5M1061.7 11.9L1012.3 -71.9M1081.5 9.4L1031.2 -74.0M1101.2 7.0L1049.9 -76.2M1120.9 4.6L1068.7 -78.4M1140.5 2.2L1087.3 -80.5M1160.0 -0.2L1105.9 -82.7M1179.5 -2.6L1124.5 -84.8M1198.9 -5.0L1143.0 -87.0M1218.2 -7.3L1161.4 -89.1M1256.8 -12.1L1198.2 -93.4M1275.9 -14.4L1216.5 -95.5M1295.1 -16.8L1234.7 -97.6M1314.1 -19.1L1252.9 -99.7M1333.1 -21.4L1271.1 -101.8M1352.1 -23.8L1289.2 -103.9M1371.0 -26.1L1307.2 -106.0M1389.8 -28.4L1325.2 -108.1M1408.6 -30.7L1343.1 -110.2M1446.0 -35.3L1378.8 -114.3M1464.6 -37.6L1396.6 -116.3M1483.2 -39.8L1414.3 -118.4M1501.7 -42.1L1432.0 -120.4M1520.1 -44.4L1449.7 -122.5M1538.5 -46.6L1467.2 -124.5M1556.9 -48.9L1484.8 -126.6M1575.2 -51.1L1502.3 -128.6M1593.4 -53.4L1519.7 -130.6M1629.7 -57.8L1554.4 -134.6M1647.8 -60.0L1571.7 -136.6M1665.8 -62.2L1589.0 -138.6M1683.8 -64.5L1606.2 -140.6M1701.7 -66.7L1623.3 -142.6M1719.5 -68.8L1640.4 -144.6M1737.4 -71.0L1657.5 -146.5M1755.1 -73.2L1674.5 -148.5M1772.8 -75.4L1691.4 -150.5M-1303.2 302.0L1790.5 -77.5M-1288.4 281.7L1776.2 -90.6M-1259.8 242.4L1748.4 -115.9M-1246.0 223.4L1734.8 -128.3M-1232.4 204.7L1721.5 -140.5" stroke="#4c5257" stroke-opacity="0.093" stroke-width="1" fill="none"/>
<path d="M-1303.2 302.0L-1219.1 186.5M-1031.2 268.6L-964.5 157.0M-768.7 236.4L-718.4 128.5M-515.2 205.3L-480.2 100.9M-270.3 175.3L-249.6 74.2M-33.4 146.2L-26.2 48.4M195.7 118.1L190.3 23.3M632.2 64.6L603.9 -24.6M840.2 39.0L801.5 -47.5M1041.9 14.3L993.4 -69.7M1237.5 -9.7L1179.8 -91.3M1427.3 -33.0L1361.0 -112.2M1611.6 -55.6L1537.1 -132.6M1790.5 -77.5L1708.4 -152.4M-1274.0 261.9L1762.2 -103.3" stroke="#25282b" stroke-opacity="0.174" stroke-width="1" fill="none"/>
<path d="M-1193.2 183.5L-1097.6 49.9M-1167.5 180.5L-1073.9 47.3M-1141.8 177.5L-1050.3 44.8M-1116.2 174.6L-1026.8 42.2M-1090.7 171.6L-1003.3 39.7M-1065.3 168.7L-979.9 37.2M-1040.0 165.7L-956.5 34.7M-1014.8 162.8L-933.3 32.2M-989.6 159.9L-910.1 29.7M-939.5 154.1L-863.9 24.7M-914.6 151.2L-841.0 22.2M-889.8 148.3L-818.1 19.8M-865.1 145.5L-795.2 17.3M-840.4 142.6L-772.5 14.9M-815.9 139.8L-749.8 12.4M-791.4 137.0L-727.2 10.0M-767.0 134.1L-704.6 7.6M-742.6 131.3L-682.1 5.1M-694.2 125.7L-637.4 0.3M-670.1 122.9L-615.1 -2.1M-646.1 120.1L-592.9 -4.5M-622.2 117.4L-570.7 -6.8M-598.3 114.6L-548.6 -9.2M-574.5 111.8L-526.6 -11.6M-550.8 109.1L-504.7 -14.0M-527.2 106.4L-482.8 -16.3M-503.7 103.6L-461.0 -18.7M-456.8 98.2L-417.6 -23.3M-433.5 95.5L-396.0 -25.7M-410.2 92.8L-374.4 -28.0M-387.0 90.1L-352.9 -30.3M-363.9 87.5L-331.5 -32.6M-340.9 84.8L-310.1 -34.9M-318.0 82.1L-288.8 -37.2M-295.1 79.5L-267.6 -39.5M-272.3 76.9L-246.4 -41.8M-226.9 71.6L-204.3 -46.3M-204.3 69.0L-183.3 -48.6M-181.8 66.4L-162.4 -50.8M-159.4 63.8L-141.5 -53.1M-137.0 61.2L-120.7 -55.3M-114.7 58.6L-100.0 -57.5M-92.5 56.0L-79.3 -59.8M-70.3 53.5L-58.7 -62.0M-48.2 50.9L-38.1 -64.2M-4.2 45.8L2.8 -68.6M17.7 43.3L23.2 -70.8M39.5 40.8L43.5 -73.0M61.2 38.2L63.7 -75.2M82.9 35.7L83.9 -77.3M104.5 33.2L104.1 -79.5M126.1 30.7L124.2 -81.7M147.6 28.3L144.2 -83.8M169.0 25.8L164.1 -86.0M211.6 20.8L203.9 -90.2M232.8 18.4L223.7 -92.4M254.0 15.9L243.4 -94.5M275.1 13.5L263.1 -96.6M296.1 11.1L282.8 -98.7M317.1 8.6L302.3 -100.8M338.0 6.2L321.8 -102.9M358.8 3.8L341.3 -105.0M379.5 1.4L360.7 -107.1M420.9 -3.4L399.3 -111.3M441.5 -5.8L418.6 -113.4M462.0 -8.1L437.8 -115.4M482.5 -10.5L456.9 -117.5M502.8 -12.9L476.0 -119.5M523.2 -15.2L495.0 -121.6M543.4 -17.6L514.0 -123.6M563.7 -19.9L532.9 -125.7M583.8 -22.3L551.8 -127.7M623.9 -26.9L589.3 -131.7M643.9 -29.2L608.0 -133.8M663.8 -31.5L626.7 -135.8M683.7 -33.8L645.3 -137.8M703.5 -36.1L663.8 -139.8M723.2 -38.4L682.3 -141.8M742.9 -40.7L700.8 -143.7M762.5 -42.9L719.2 -145.7M782.0 -45.2L737.5 -147.7M821.0 -49.7L774.1 -151.6M840.4 -52.0L792.3 -153.6M859.7 -54.2L810.4 -155.5M879.0 -56.4L828.5 -157.5M898.2 -58.6L846.6 -159.4M917.4 -60.9L864.6 -161.4M936.5 -63.1L882.5 -163.3M955.5 -65.3L900.4 -165.2M974.5 -67.5L918.3 -167.2M1012.3 -71.9L953.8 -171.0M1031.2 -74.0L971.5 -172.9M1049.9 -76.2L989.2 -174.8M1068.7 -78.4L1006.8 -176.7M1087.3 -80.5L1024.3 -178.6M1105.9 -82.7L1041.9 -180.5M1124.5 -84.8L1059.3 -182.3M1143.0 -87.0L1076.7 -184.2M1161.4 -89.1L1094.1 -186.1M1198.2 -93.4L1128.7 -189.8M1216.5 -95.5L1146.0 -191.7M1234.7 -97.6L1163.2 -193.5M1252.9 -99.7L1180.3 -195.4M1271.1 -101.8L1197.4 -197.2M1289.2 -103.9L1214.4 -199.0M1307.2 -106.0L1231.5 -200.9M1325.2 -108.1L1248.4 -202.7M1343.1 -110.2L1265.3 -204.5M1378.8 -114.3L1299.0 -208.1M1396.6 -116.3L1315.8 -210.0M1414.3 -118.4L1332.5 -211.8M1432.0 -120.4L1349.2 -213.6M1449.7 -122.5L1365.9 -215.3M1467.2 -124.5L1382.5 -217.1M1484.8 -126.6L1399.1 -218.9M1502.3 -128.6L1415.6 -220.7M1519.7 -130.6L1432.1 -222.5M1554.4 -134.6L1464.9 -226.0M1571.7 -136.6L1481.2 -227.8M1589.0 -138.6L1497.5 -229.5M1606.2 -140.6L1513.8 -231.3M1623.3 -142.6L1530.0 -233.0M1640.4 -144.6L1546.2 -234.8M1657.5 -146.5L1562.3 -236.5M1674.5 -148.5L1578.4 -238.2M1691.4 -150.5L1594.5 -240.0M-1219.1 186.5L1708.4 -152.4M-1206.0 168.5L1695.4 -164.2M-1193.2 151.0L1682.7 -175.8M-1180.7 133.8L1670.2 -187.2M-1168.3 116.9L1657.9 -198.5M-1156.3 100.3L1645.8 -209.5M-1132.8 68.1L1622.1 -231.1" stroke="#4c5257" stroke-opacity="0.040" stroke-width="1" fill="none"/>
<path d="M-1219.1 186.5L-1121.4 52.4M-964.5 157.0L-887.0 27.2M-718.4 128.5L-659.7 2.7M-480.2 100.9L-439.3 -21.0M-249.6 74.2L-225.3 -44.0M-26.2 48.4L-17.7 -66.4M190.3 23.3L184.1 -88.1M603.9 -24.6L570.6 -129.7M801.5 -47.5L755.8 -149.7M993.4 -69.7L936.1 -169.1M1179.8 -91.3L1111.4 -188.0M1361.0 -112.2L1282.2 -206.3M1537.1 -132.6L1448.5 -224.2M1708.4 -152.4L1610.5 -241.7M-1144.4 84.0L1633.8 -220.4" stroke="#25282b" stroke-opacity="0.074" stroke-width="1" fill="none"/>
<path d="M-1097.6 49.9L-969.3 -129.6M-1073.9 47.3L-948.3 -131.6M-1050.3 44.8L-927.4 -133.6M-1026.8 42.2L-906.5 -135.6M-1003.3 39.7L-885.7 -137.6M-979.9 37.2L-865.0 -139.6M-956.5 34.7L-844.3 -141.6M-933.3 32.2L-823.6 -143.6M-910.1 29.7L-803.1 -145.6M-863.9 24.7L-762.1 -149.6M-841.0 22.2L-741.7 -151.5M-818.1 19.8L-721.3 -153.5M-795.2 17.3L-701.0 -155.5M-772.5 14.9L-680.8 -157.4M-749.8 12.4L-660.6 -159.4M-727.2 10.0L-640.5 -161.3M-704.6 7.6L-620.4 -163.3M-682.1 5.1L-600.4 -165.2M-637.4 0.3L-560.6 -169.0M-615.1 -2.1L-540.7 -171.0M-592.9 -4.5L-520.9 -172.9M-570.7 -6.8L-501.2 -174.8M-548.6 -9.2L-481.5 -176.7M-526.6 -11.6L-461.9 -178.6M-504.7 -14.0L-442.3 -180.5M-482.8 -16.3L-422.7 -182.4M-461.0 -18.7L-403.3 -184.2M-417.6 -23.3L-364.5 -188.0M-396.0 -25.7L-345.1 -189.8M-374.4 -28.0L-325.9 -191.7M-352.9 -30.3L-306.7 -193.6M-331.5 -32.6L-287.5 -195.4M-310.1 -34.9L-268.4 -197.3M-288.8 -37.2L-249.3 -199.1M-267.6 -39.5L-230.3 -200.9M-246.4 -41.8L-211.3 -202.8M-204.3 -46.3L-173.6 -206.4M-183.3 -48.6L-154.8 -208.2M-162.4 -50.8L-136.0 -210.1M-141.5 -53.1L-117.3 -211.9M-120.7 -55.3L-98.6 -213.7M-100.0 -57.5L-80.0 -215.5M-79.3 -59.8L-61.5 -217.3M-58.7 -62.0L-42.9 -219.0M-38.1 -64.2L-24.5 -220.8M2.8 -68.6L12.3 -224.4M23.2 -70.8L30.6 -226.1M43.5 -73.0L48.9 -227.9M63.7 -75.2L67.1 -229.7M83.9 -77.3L85.3 -231.4M104.1 -79.5L103.4 -233.2M124.2 -81.7L121.5 -234.9M144.2 -83.8L139.6 -236.7M164.1 -86.0L157.6 -238.4M203.9 -90.2L193.4 -241.9M223.7 -92.4L211.2 -243.6M243.4 -94.5L229.1 -245.3M263.1 -96.6L246.8 -247.0M282.8 -98.7L264.5 -248.7M302.3 -100.8L282.2 -250.5M321.8 -102.9L299.8 -252.2M341.3 -105.0L317.4 -253.9M360.7 -107.1L334.9 -255.5M399.3 -111.3L369.9 -258.9M418.6 -113.4L387.3 -260.6M437.8 -115.4L404.6 -262.3M456.9 -117.5L421.9 -263.9M476.0 -119.5L439.2 -265.6M495.0 -121.6L456.4 -267.3M514.0 -123.6L473.6 -268.9M532.9 -125.7L490.7 -270.6M551.8 -127.7L507.8 -272.2M589.3 -131.7L541.9 -275.5M608.0 -133.8L558.8 -277.2M626.7 -135.8L575.7 -278.8M645.3 -137.8L592.6 -280.4M663.8 -139.8L609.5 -282.1M682.3 -141.8L626.3 -283.7M700.8 -143.7L643.0 -285.3M719.2 -145.7L659.7 -286.9M737.5 -147.7L676.4 -288.5M774.1 -151.6L709.6 -291.7M792.3 -153.6L726.1 -293.3M810.4 -155.5L742.6 -294.9M828.5 -157.5L759.1 -296.5M846.6 -159.4L775.5 -298.1M864.6 -161.4L791.9 -299.7M882.5 -163.3L808.2 -301.3M900.4 -165.2L824.5 -302.8M918.3 -167.2L840.8 -304.4M953.8 -171.0L873.2 -307.5M971.5 -172.9L889.3 -309.1M989.2 -174.8L905.4 -310.7M1006.8 -176.7L921.5 -312.2M1024.3 -178.6L937.5 -313.8M1041.9 -180.5L953.5 -315.3M1059.3 -182.3L969.4 -316.8M1076.7 -184.2L985.3 -318.4M1094.1 -186.1L1001.2 -319.9M1128.7 -189.8L1032.8 -323.0M1146.0 -191.7L1048.6 -324.5M1163.2 -193.5L1064.3 -326.0M1180.3 -195.4L1079.9 -327.5M1197.4 -197.2L1095.6 -329.0M1214.4 -199.0L1111.2 -330.5M1231.5 -200.9L1126.7 -332.0M1248.4 -202.7L1142.3 -333.5M1265.3 -204.5L1157.8 -335.0M1299.0 -208.1L1188.6 -338.0M1315.8 -210.0L1204.0 -339.5M1332.5 -211.8L1219.3 -341.0M1349.2 -213.6L1234.6 -342.5M1365.9 -215.3L1249.9 -343.9M1382.5 -217.1L1265.1 -345.4M1399.1 -218.9L1280.3 -346.9M1415.6 -220.7L1295.5 -348.3M1432.1 -222.5L1310.6 -349.8M1464.9 -226.0L1340.7 -352.7M1481.2 -227.8L1355.7 -354.2M1497.5 -229.5L1370.7 -355.6M1513.8 -231.3L1385.6 -357.1M1530.0 -233.0L1400.5 -358.5M1546.2 -234.8L1415.4 -359.9M1562.3 -236.5L1430.2 -361.4M1578.4 -238.2L1445.0 -362.8M1594.5 -240.0L1459.8 -364.2M-1121.4 52.4L1610.5 -241.7M-1110.2 37.1L1599.1 -252.1M-1099.2 22.0L1587.9 -262.3M-1088.4 7.2L1576.8 -272.4M-1077.8 -7.4L1565.9 -282.4M-1067.4 -21.7L1555.1 -292.1M-1057.2 -35.7L1544.6 -301.8M-1047.1 -49.5L1534.1 -311.3M-1027.5 -76.4L1513.7 -329.9M-1018.0 -89.5L1503.7 -339.1M-1008.6 -102.4L1493.8 -348.0M-999.4 -115.1L1484.1 -356.9" stroke="#4c5257" stroke-opacity="0.040" stroke-width="1" fill="none"/>
<path d="M-1121.4 52.4L-990.3 -127.5M-887.0 27.2L-782.5 -147.6M-659.7 2.7L-580.5 -167.1M-439.3 -21.0L-383.8 -186.1M-225.3 -44.0L-192.4 -204.6M-17.7 -66.4L-6.1 -222.6M184.1 -88.1L175.5 -240.1M570.6 -129.7L524.9 -273.9M755.8 -149.7L693.0 -290.1M936.1 -169.1L857.0 -306.0M1111.4 -188.0L1017.0 -321.4M1282.2 -206.3L1173.2 -336.5M1448.5 -224.2L1325.7 -351.3M1610.5 -241.7L1474.5 -365.6M-1037.2 -63.1L1523.8 -320.7" stroke="#25282b" stroke-opacity="0.074" stroke-width="1" fill="none"/>
<path d="M-969.3 -129.6L-680.1 -533.7M-948.3 -131.6L-665.1 -534.8M-927.4 -133.6L-650.1 -535.9M-906.5 -135.6L-635.2 -536.9M-885.7 -137.6L-620.3 -538.0M-865.0 -139.6L-605.4 -539.0M-844.3 -141.6L-590.5 -540.1M-823.6 -143.6L-575.7 -541.1M-803.1 -145.6L-560.9 -542.2M-762.1 -149.6L-531.4 -544.3M-741.7 -151.5L-516.7 -545.3M-721.3 -153.5L-502.1 -546.4M-701.0 -155.5L-487.4 -547.4M-680.8 -157.4L-472.8 -548.4M-660.6 -159.4L-458.2 -549.5M-640.5 -161.3L-443.7 -550.5M-620.4 -163.3L-429.1 -551.5M-600.4 -165.2L-414.6 -552.6M-560.6 -169.0L-385.7 -554.6M-540.7 -171.0L-371.3 -555.6M-520.9 -172.9L-356.9 -556.7M-501.2 -174.8L-342.6 -557.7M-481.5 -176.7L-328.3 -558.7M-461.9 -178.6L-314.0 -559.7M-442.3 -180.5L-299.7 -560.7M-422.7 -182.4L-285.5 -561.7M-403.3 -184.2L-271.3 -562.8M-364.5 -188.0L-242.9 -564.8M-345.1 -189.8L-228.8 -565.8M-325.9 -191.7L-214.7 -566.8M-306.7 -193.6L-200.6 -567.8M-287.5 -195.4L-186.6 -568.8M-268.4 -197.3L-172.6 -569.8M-249.3 -199.1L-158.6 -570.8M-230.3 -200.9L-144.6 -571.7M-211.3 -202.8L-130.7 -572.7M-173.6 -206.4L-102.9 -574.7M-154.8 -208.2L-89.1 -575.7M-136.0 -210.1L-75.3 -576.7M-117.3 -211.9L-61.5 -577.6M-98.6 -213.7L-47.7 -578.6M-80.0 -215.5L-34.0 -579.6M-61.5 -217.3L-20.2 -580.6M-42.9 -219.0L-6.6 -581.5M-24.5 -220.8L7.1 -582.5M12.3 -224.4L34.4 -584.5M30.6 -226.1L47.9 -585.4M48.9 -227.9L61.5 -586.4M67.1 -229.7L75.0 -587.3M85.3 -231.4L88.5 -588.3M103.4 -233.2L102.0 -589.3M121.5 -234.9L115.4 -590.2M139.6 -236.7L128.9 -591.2M157.6 -238.4L142.3 -592.1M193.4 -241.9L169.0 -594.0M211.2 -243.6L182.3 -595.0M229.1 -245.3L195.6 -595.9M246.8 -247.0L208.9 -596.8M264.5 -248.7L222.1 -597.8M282.2 -250.5L235.3 -598.7M299.8 -252.2L248.5 -599.7M317.4 -253.9L261.7 -600.6M334.9 -255.5L274.8 -601.5M369.9 -258.9L301.1 -603.4M387.3 -260.6L314.1 -604.3M404.6 -262.3L327.2 -605.2M421.9 -263.9L340.2 -606.2M439.2 -265.6L353.2 -607.1M456.4 -267.3L366.1 -608.0M473.6 -268.9L379.1 -608.9M490.7 -270.6L392.0 -609.8M507.8 -272.2L404.9 -610.8M541.9 -275.5L430.6 -612.6M558.8 -277.2L443.4 -613.5M575.7 -278.8L456.2 -614.4M592.6 -280.4L469.0 -615.3M609.5 -282.1L481.8 -616.2M626.3 -283.7L494.5 -617.1M643.0 -285.3L507.2 -618.0M659.7 -286.9L519.9 -618.9M676.4 -288.5L532.5 -619.8M709.6 -291.7L557.8 -621.6M726.1 -293.3L570.3 -622.5M742.6 -294.9L582.9 -623.4M759.1 -296.5L595.4 -624.3M775.5 -298.1L608.0 -625.2M791.9 -299.7L620.4 -626.1M808.2 -301.3L632.9 -626.9M824.5 -302.8L645.4 -627.8M840.8 -304.4L657.8 -628.7M873.2 -307.5L682.6 -630.5M889.3 -309.1L694.9 -631.4M905.4 -310.7L707.2 -632.2M921.5 -312.2L719.5 -633.1M937.5 -313.8L731.8 -634.0M953.5 -315.3L744.1 -634.8M969.4 -316.8L756.3 -635.7M985.3 -318.4L768.5 -636.6M1001.2 -319.9L780.7 -637.4M1032.8 -323.0L805.0 -639.2M1048.6 -324.5L817.2 -640.0M1064.3 -326.0L829.3 -640.9M1079.9 -327.5L841.4 -641.7M1095.6 -329.0L853.4 -642.6M1111.2 -330.5L865.4 -643.5M1126.7 -332.0L877.5 -644.3M1142.3 -333.5L889.5 -645.2M1157.8 -335.0L901.4 -646.0M1188.6 -338.0L925.3 -647.7M1204.0 -339.5L937.2 -648.6M1219.3 -341.0L949.1 -649.4M1234.6 -342.5L961.0 -650.2M1249.9 -343.9L972.8 -651.1M1265.1 -345.4L984.6 -651.9M1280.3 -346.9L996.4 -652.8M1295.5 -348.3L1008.2 -653.6M1310.6 -349.8L1019.9 -654.4M1340.7 -352.7L1043.4 -656.1M1355.7 -354.2L1055.1 -656.9M1370.7 -355.6L1066.8 -657.8M1385.6 -357.1L1078.4 -658.6M1400.5 -358.5L1090.0 -659.4M1415.4 -359.9L1101.6 -660.2M1430.2 -361.4L1113.2 -661.1M1445.0 -362.8L1124.8 -661.9M1459.8 -364.2L1136.3 -662.7M-990.3 -127.5L1474.5 -365.6M-981.4 -139.8L1465.1 -374.3M-972.6 -151.8L1455.8 -382.8M-964.0 -163.7L1446.6 -391.1M-955.5 -175.4L1437.5 -399.4M-938.9 -198.1L1419.7 -415.6M-930.7 -209.3L1411.0 -423.6M-922.8 -220.2L1402.4 -431.4M-914.9 -231.0L1393.9 -439.2M-907.2 -241.6L1385.5 -446.8M-899.6 -252.1L1377.2 -454.4M-892.0 -262.4L1369.1 -461.8M-884.7 -272.5L1361.0 -469.2M-877.4 -282.5L1353.1 -476.4M-863.1 -302.1L1337.4 -490.7M-856.2 -311.7L1329.8 -497.7M-849.3 -321.1L1322.2 -504.6M-842.5 -330.4L1314.7 -511.4M-835.8 -339.5L1307.3 -518.1M-829.3 -348.6L1300.0 -524.8M-822.8 -357.5L1292.8 -531.4M-816.4 -366.2L1285.7 -537.9M-810.1 -374.9L1278.6 -544.3M-797.7 -391.9L1264.8 -556.9M-791.7 -400.2L1258.0 -563.1M-785.7 -408.4L1251.3 -569.2M-779.8 -416.5L1244.6 -575.3M-774.0 -424.5L1238.1 -581.3M-768.2 -432.3L1231.6 -587.2M-762.6 -440.1L1225.1 -593.0M-757.0 -447.8L1218.8 -598.8M-751.5 -455.4L1212.5 -604.6M-740.6 -470.2L1200.2 -615.8M-735.3 -477.5L1194.1 -621.3M-730.1 -484.7L1188.1 -626.8M-724.9 -491.8L1182.2 -632.2M-719.8 -498.8L1176.3 -637.6M-714.7 -505.8L1170.5 -642.9M-709.7 -512.6L1164.8 -648.1M-704.8 -519.4L1159.1 -653.3M-700.0 -526.1L1153.4 -658.4" stroke="#4c5257" stroke-opacity="0.040" stroke-width="1" fill="none"/>
<path d="M-990.3 -127.5L-695.1 -532.7M-782.5 -147.6L-546.2 -543.2M-580.5 -167.1L-400.2 -553.6M-383.8 -186.1L-257.1 -563.8M-192.4 -204.6L-116.8 -573.7M-6.1 -222.6L20.7 -583.5M175.5 -240.1L155.6 -593.1M524.9 -273.9L417.8 -611.7M693.0 -290.1L545.2 -620.7M857.0 -306.0L670.2 -629.6M1017.0 -321.4L792.9 -638.3M1173.2 -336.5L913.4 -646.9M1325.7 -351.3L1031.7 -655.3M1474.5 -365.6L1147.9 -663.5M-947.1 -186.8L1428.5 -407.6M-870.2 -292.4L1345.2 -483.6M-803.8 -383.5L1271.7 -550.6M-746.0 -462.8L1206.3 -610.2M-695.1 -532.7L1147.9 -663.5" stroke="#25282b" stroke-opacity="0.074" stroke-width="1" fill="none"/>
<path d="M-1293.1 707.0L1889.7 232.1" stroke="#4a62c8" stroke-width="1" fill="none"/>
<defs><linearGradient id="rg" gradientUnits="userSpaceOnUse" x1="0" y1="7" x2="0" y2="874"><stop offset="0" stop-color="#7a3a32"/><stop offset="0.12" stop-color="#a84636"/><stop offset="0.5" stop-color="#c84c38"/><stop offset="1" stop-color="#e04c38"/></linearGradient></defs>
<path d="M582.3 974.2L299.3 -541.7" stroke="url(#rg)" stroke-width="1" fill="none"/>
<clipPath id="mc"><path d="M206.0 254.0L380.0 237.0L497.0 219.0L521.0 216.6L580.0 215.0L637.0 220.0L683.0 224.0L693.0 241.5L707.0 269.0L717.0 296.0L726.0 332.0L730.0 361.0L734.0 385.0L736.0 416.0L749.0 447.0L763.0 480.0L790.0 527.0L810.0 566.0L816.5 577.0L816.0 620.0L813.0 635.0L812.0 673.0L777.0 672.0L746.0 671.0L729.0 671.0L709.0 678.0L640.0 698.5L552.0 720.0L536.0 723.0L440.0 735.0L332.0 751.0L275.0 754.0L237.0 755.0L195.0 755.0L197.0 728.0L200.0 695.0L205.0 667.0L212.0 640.0L217.0 620.0L222.5 589.0L225.4 577.0L224.5 548.0L221.6 509.0L218.0 486.0L211.0 459.0L206.0 431.0L202.0 401.0L201.6 382.0L205.0 346.0L207.0 305.0Z"/></clipPath>
<path d="M206.0 254.0L380.0 237.0L497.0 219.0L521.0 216.6L580.0 215.0L637.0 220.0L683.0 224.0L693.0 241.5L707.0 269.0L717.0 296.0L726.0 332.0L730.0 361.0L734.0 385.0L736.0 416.0L749.0 447.0L763.0 480.0L790.0 527.0L810.0 566.0L816.5 577.0L816.0 620.0L813.0 635.0L812.0 673.0L777.0 672.0L746.0 671.0L729.0 671.0L709.0 678.0L640.0 698.5L552.0 720.0L536.0 723.0L440.0 735.0L332.0 751.0L275.0 754.0L237.0 755.0L195.0 755.0L197.0 728.0L200.0 695.0L205.0 667.0L212.0 640.0L217.0 620.0L222.5 589.0L225.4 577.0L224.5 548.0L221.6 509.0L218.0 486.0L211.0 459.0L206.0 431.0L202.0 401.0L201.6 382.0L205.0 346.0L207.0 305.0Z" fill="#a3a3a3"/>
<g clip-path="url(#mc)"><path d="M239.4 250.7L240.3 267.6L241.2 284.5L242.0 301.4L241.7 318.4L241.3 335.3L240.5 352.3L239.3 369.2L238.7 386.2L239.7 403.2L242.0 420.1L244.6 436.9L247.4 453.7L251.3 470.2L255.5 486.7L258.4 503.5L260.3 520.4L261.9 537.3L263.4 554.1L264.4 571.0L262.5 587.6L260.3 604.2L257.9 620.9L254.6 637.3L251.3 653.7L247.6 670.3L244.9 687.1L242.8 704.0L241.3 721.0L240.0 738.0L238.8 755.0M272.7 247.5L274.2 264.3L275.5 281.2L276.8 298.1L277.0 315.1L277.1 332.1L276.6 349.2L275.9 366.2L275.6 383.3L276.7 400.4L279.0 417.4L281.6 434.3L284.3 451.3L288.1 467.9L292.5 484.5L295.6 501.3L297.9 518.2L299.9 535.2L301.8 552.0L303.4 568.8L302.2 585.4L300.8 602.1L299.2 618.7L296.7 635.2L294.2 651.6L290.8 668.4L288.3 685.3L286.3 702.3L284.7 719.4L283.6 736.5L282.5 753.6M303.2 244.5L305.1 261.3L307.0 278.2L308.7 295.1L309.4 312.0L309.9 329.1L309.7 346.2L309.3 363.2L309.3 380.4L310.5 397.6L312.8 414.6L315.4 431.7L318.0 448.7L321.8 465.5L326.3 482.0L329.7 498.9L332.3 515.8L334.6 532.7L337.0 549.5L339.1 566.3L338.6 582.8L337.8 599.5L336.9 616.1L335.2 632.6L333.4 649.0L330.3 665.9L328.0 682.9L326.1 700.0L324.5 717.1L323.4 734.3L322.4 751.5M331.7 241.7L334.0 258.4L336.3 275.1L338.5 291.9L339.5 308.8L340.4 325.8L340.6 342.8L340.5 359.9L340.7 377.0L342.0 394.1L344.4 411.2L346.9 428.2L349.4 445.3L353.2 462.0L357.8 478.5L361.4 495.3L364.3 512.1L366.9 529.0L369.7 545.6L372.3 562.3L372.4 578.7L372.3 595.2L372.0 611.8L370.9 628.2L369.9 644.5L367.0 661.3L364.8 678.4L363.0 695.4L361.4 712.6L360.3 729.8L359.4 746.9M357.3 239.2L360.1 255.7L362.8 272.3L365.3 289.0L366.7 305.8L368.0 322.6L368.4 339.6L368.6 356.6L369.0 373.7L370.4 390.8L372.8 407.8L375.3 424.8L377.7 441.8L381.4 458.5L386.1 475.0L389.9 491.6L393.1 508.4L396.0 525.1L399.2 541.6L402.1 558.1L402.8 574.4L403.3 590.8L403.5 607.3L403.1 623.5L402.7 639.7L400.0 656.6L398.0 673.6L396.2 690.6L394.6 707.7L393.6 724.9L392.7 742.0M391.1 235.3L394.5 251.6L397.6 268.1L400.7 284.6L402.6 301.3L404.3 318.0L405.1 335.0L405.7 351.9L406.3 368.9L407.8 386.0L410.2 403.0L412.7 419.9L415.0 436.9L418.6 453.6L423.5 470.0L427.6 486.5L431.0 503.2L434.3 519.8L438.0 536.1L441.5 552.4L442.9 568.6L444.1 584.8L445.1 601.1L445.5 617.3L446.0 633.3L443.6 650.2L441.8 667.2L440.1 684.2L438.4 701.3L437.5 718.4L436.6 735.5M419.3 231.0L423.1 247.2L426.7 263.6L430.2 280.0L432.4 296.7L434.5 313.4L435.7 330.4L436.6 347.3L437.5 364.3L439.0 381.5L441.5 398.5L444.0 415.5L446.1 432.5L449.7 449.2L454.7 465.6L459.0 482.1L462.8 498.7L466.3 515.3L470.5 531.5L474.4 547.8L476.5 563.8L478.4 580.0L480.0 596.3L481.1 612.4L482.2 628.4L480.1 645.3L478.4 662.4L476.8 679.4L475.1 696.5L474.3 713.7L473.5 730.8M451.1 226.1L455.4 242.2L459.5 258.5L463.4 274.9L466.2 291.5L468.7 308.2L470.2 325.2L471.5 342.1L472.7 359.2L474.3 376.4L476.8 393.4L479.3 410.5L481.3 427.6L484.8 444.3L490.0 460.7L494.6 477.2L498.7 493.7L502.6 510.3L507.2 526.4L511.6 542.6L514.5 558.5L517.0 574.7L519.4 590.9L521.2 606.9L523.2 622.9L521.3 639.9L519.9 657.0L518.3 674.1L516.6 691.2L515.8 708.4L515.1 725.6M484.5 220.9L489.4 236.9L494.0 253.1L498.5 269.3L501.7 285.8L504.7 302.4L506.6 319.4L508.3 336.3L509.7 353.3L511.4 370.4L513.9 387.5L516.4 404.5L518.3 421.6L521.7 438.4L527.1 454.7L531.9 471.1L536.3 487.5L540.6 504.0L545.7 520.0L550.7 535.9L554.3 551.8L557.6 567.8L560.7 583.9L563.3 599.8L566.1 615.6L564.5 632.7L563.3 649.8L561.8 666.9L560.1 684.0L559.4 701.2L558.7 718.4M510.8 217.6L516.1 233.4L521.1 249.3L525.9 265.3L529.5 281.7L532.8 298.1L535.0 314.9L536.9 331.7L538.5 348.6L540.3 365.6L542.8 382.5L545.2 399.4L547.1 416.4L550.4 433.0L555.9 449.2L560.9 465.4L565.5 481.7L570.0 498.0L575.5 513.7L580.9 529.4L585.1 545.1L589.0 560.8L592.6 576.7L595.9 592.5L599.3 608.1L597.9 625.0L596.8 642.1L595.4 659.0L593.6 676.0L592.9 693.1L592.3 710.2M536.6 216.2L542.2 231.6L547.6 247.3L552.8 263.0L556.7 279.2L560.3 295.4L562.7 312.0L565.0 328.5L566.7 345.3L568.6 362.1L571.1 378.8L573.5 395.6L575.2 412.4L578.4 428.9L584.0 444.8L589.2 460.8L594.0 476.8L598.8 492.8L604.7 508.3L610.4 523.7L615.2 539.1L619.6 554.6L623.8 570.2L627.6 585.8L631.7 601.1L630.4 617.9L629.5 634.8L628.1 651.6L626.2 668.3L625.6 685.3L625.0 702.2M567.1 215.4L573.2 230.4L578.9 245.7L584.5 261.0L588.8 276.8L592.8 292.7L595.5 309.0L598.1 325.2L600.0 341.7L601.9 358.2L604.4 374.7L606.7 391.2L608.3 407.7L611.4 423.9L617.1 439.5L622.5 455.2L627.6 470.8L632.7 486.5L638.9 501.6L645.1 516.6L650.5 531.6L655.6 546.7L660.4 562.0L664.9 577.2L669.7 592.1L668.7 608.7L667.8 625.3L666.5 641.8L664.5 658.3L663.9 674.9L663.4 691.6M597.9 216.6L604.4 231.1L610.6 245.9L616.6 260.8L621.3 276.1L625.7 291.6L628.7 307.4L631.6 323.3L633.7 339.4L635.6 355.5L638.1 371.6L640.3 387.7L641.7 403.9L644.7 419.7L650.5 434.9L656.1 450.1L661.5 465.4L666.8 480.6L673.5 495.1L680.1 509.7L686.2 524.1L691.8 538.8L697.3 553.6L702.5 568.3L708.0 582.8L707.2 599.0L706.5 615.3L705.1 631.4L703.2 647.5L702.6 663.8L702.0 680.1M628.3 219.2L635.4 233.3L641.9 247.6L648.3 262.0L653.4 277.0L658.2 292.0L661.5 307.5L664.7 323.0L667.0 338.7L669.0 354.6L671.5 370.3L673.6 386.1L674.8 401.9L677.8 417.4L683.7 432.2L689.4 447.0L695.1 461.8L700.7 476.6L707.8 490.7L714.8 504.8L721.5 518.8L727.8 533.0L733.9 547.4L739.8 561.7L746.1 575.8L745.4 591.6L744.9 607.6L743.6 623.4L741.5 639.1L741.0 655.1L740.4 671.0M661.7 222.1L669.3 236.1L676.3 250.3L683.3 264.5L688.8 279.4L694.1 294.4L697.7 309.9L701.3 325.3L703.9 341.0L706.0 356.8L708.5 372.6L710.7 388.3L711.8 404.2L714.6 419.7L720.7 434.4L726.7 449.2L732.7 463.9L738.7 478.6L746.3 492.6L753.9 506.5L761.4 520.4L768.4 534.5L775.2 548.7L782.0 563.0L789.1 576.9L788.7 592.8L788.4 608.8L787.1 624.6L785.1 640.3L784.6 656.3L784.1 672.2M206.4 276.2L222.7 274.7L239.0 273.1L255.2 271.6L271.5 270.0L287.7 268.4L304.0 266.8L320.2 265.2L336.5 263.5L352.7 261.8L369.0 260.1L385.2 258.4L401.4 255.9L417.5 253.4L433.7 250.9L449.8 248.4L466.0 245.9L482.1 243.4L498.2 240.8L514.4 238.7L530.7 237.1L547.0 236.4L563.3 235.7L579.6 235.0L595.8 235.1L612.1 236.1L628.3 237.1L644.6 238.3L660.8 239.6L677.1 240.9L693.4 242.2M206.9 308.0L223.6 306.5L240.3 304.9L257.0 303.4L273.7 301.8L290.4 300.2L307.2 298.6L323.9 296.9L340.5 295.0L357.2 293.2L373.9 291.4L390.6 289.5L407.2 286.9L423.8 284.3L440.4 281.8L457.0 279.2L473.6 276.6L490.2 274.0L506.8 271.2L523.4 268.9L540.1 267.0L556.8 266.0L573.5 264.9L590.2 263.7L606.8 263.4L623.5 263.9L640.1 264.3L656.8 265.4L673.5 266.6L690.3 267.8L707.0 269.0M205.7 331.3L222.7 329.9L239.8 328.4L256.8 326.9L273.8 325.4L290.8 323.7L307.8 322.1L324.9 320.4L341.8 318.5L358.8 316.6L375.8 314.7L392.8 312.7L409.7 310.1L426.6 307.5L443.5 304.9L460.4 302.3L477.3 299.8L494.2 297.1L511.1 294.2L528.0 291.7L544.9 289.6L561.9 288.4L578.9 287.1L595.8 285.7L612.8 285.0L629.7 285.2L646.5 285.2L663.5 286.2L680.6 287.4L697.6 288.5L714.7 289.7M204.7 349.5L221.9 348.1L239.1 346.7L256.4 345.2L273.6 343.7L290.8 342.1L308.0 340.6L325.3 338.8L342.4 336.9L359.6 334.9L376.8 332.9L394.0 330.9L411.1 328.3L428.2 325.7L445.3 323.1L462.4 320.6L479.6 318.0L496.7 315.3L513.7 312.3L530.8 309.7L547.9 307.5L565.1 306.1L582.2 304.6L599.4 303.0L616.5 302.1L633.5 302.0L650.6 301.7L667.8 302.8L685.0 303.9L702.3 305.0L719.5 306.1M202.6 371.7L220.1 370.4L237.5 369.1L255.0 367.6L272.5 366.2L290.0 364.7L307.5 363.1L324.9 361.4L342.4 359.4L359.8 357.4L377.2 355.3L394.6 353.3L412.0 350.6L429.4 348.1L446.7 345.5L464.1 342.9L481.4 340.4L498.8 337.6L516.1 334.6L533.4 331.9L550.7 329.5L568.1 328.0L585.5 326.3L602.8 324.5L620.1 323.3L637.4 322.9L654.7 322.3L672.2 323.2L689.6 324.3L707.1 325.4L724.6 326.5M202.2 402.7L219.9 401.5L237.6 400.4L255.2 399.0L272.9 397.7L290.5 396.2L308.2 394.7L325.8 393.0L343.4 390.9L361.0 388.9L378.6 386.8L396.2 384.7L413.8 382.1L431.3 379.5L448.9 377.0L466.4 374.4L483.9 371.9L501.4 369.2L518.9 366.0L536.3 363.2L553.8 360.6L571.4 358.8L588.9 356.9L606.3 354.7L623.8 353.2L641.2 352.4L658.5 351.3L676.2 352.2L693.9 353.3L711.6 354.4L729.2 355.5M208.4 444.6L226.1 443.7L243.8 442.7L261.4 441.5L279.1 440.3L296.7 439.0L314.4 437.6L332.0 435.9L349.6 433.8L367.2 431.7L384.8 429.5L402.3 427.4L419.8 424.8L437.4 422.3L454.9 419.8L472.5 417.3L490.0 414.8L507.5 412.1L524.9 408.8L542.3 405.8L559.7 403.0L577.2 400.9L594.7 398.6L612.0 396.1L629.4 394.1L646.7 392.7L664.0 391.0L681.6 391.9L699.3 393.0L717.0 394.1L734.7 395.2M213.4 468.1L230.9 467.2L248.5 466.4L266.1 465.3L283.7 464.2L301.2 462.9L318.8 461.6L336.3 459.9L353.8 457.8L371.3 455.7L388.8 453.5L406.3 451.4L423.7 448.8L441.2 446.3L458.6 443.9L476.1 441.4L493.5 439.0L510.9 436.2L528.2 432.9L545.5 429.8L562.8 426.9L580.2 424.6L597.5 422.1L614.8 419.4L632.0 417.2L649.3 415.5L666.3 413.4L683.9 414.3L701.5 415.4L719.1 416.5L736.7 417.6M219.5 495.8L237.3 495.1L255.0 494.3L272.7 493.3L290.5 492.2L308.2 491.0L325.9 489.7L343.6 488.0L361.2 485.8L378.9 483.6L396.5 481.3L414.1 479.1L431.7 476.4L449.3 474.0L466.9 471.5L484.5 469.1L502.1 466.6L519.7 463.8L537.1 460.4L554.5 457.1L572.0 454.0L589.5 451.4L606.9 448.7L624.3 445.7L641.6 443.1L658.9 441.0L676.1 438.4L693.9 439.2L711.6 440.3L729.3 441.4L747.1 442.4M223.3 532.3L241.4 531.7L259.5 531.0L277.6 530.0L295.7 529.0L313.7 527.7L331.8 526.5L349.8 524.7L367.8 522.4L385.7 520.0L403.7 517.6L421.7 515.3L439.6 512.6L457.5 510.1L475.5 507.6L493.4 505.1L511.4 502.6L529.2 499.7L547.0 496.1L564.7 492.5L582.5 489.2L600.2 486.3L618.0 483.1L635.6 479.6L653.2 476.6L670.8 473.9L688.3 470.8L706.4 471.4L724.4 472.4L742.5 473.4L760.6 474.4M225.1 568.3L243.7 567.6L262.3 567.0L280.9 566.0L299.5 565.0L318.0 563.7L336.6 562.3L355.1 560.5L373.6 558.0L392.0 555.4L410.5 552.9L428.9 550.3L447.3 547.5L465.8 544.9L484.2 542.3L502.7 539.7L521.1 537.1L539.5 534.1L557.7 530.2L575.9 526.4L594.1 522.7L612.3 519.4L630.5 515.8L648.6 511.9L666.6 508.2L684.7 505.0L702.6 501.2L721.1 501.6L739.7 502.5L758.3 503.4L776.9 504.2M220.8 598.3L240.1 597.7L259.3 597.1L278.5 596.1L297.7 595.1L316.9 593.7L336.1 592.4L355.3 590.4L374.3 587.7L393.4 585.1L412.5 582.4L431.6 579.6L450.6 576.7L469.7 574.1L488.7 571.4L507.8 568.8L526.9 566.1L545.9 563.0L564.7 558.9L583.5 554.8L602.3 550.8L621.2 547.2L639.9 543.2L658.6 538.9L677.2 534.8L695.9 531.1L714.3 526.7L733.5 527.0L752.7 527.8L771.9 528.5L791.2 529.3M213.2 635.4L233.2 634.9L253.2 634.3L273.3 633.4L293.3 632.4L313.3 631.0L333.4 629.6L353.3 627.6L373.2 624.8L393.1 621.9L412.9 619.1L432.8 616.2L452.7 613.2L472.6 610.5L492.5 607.8L512.4 605.1L532.3 602.4L552.1 599.1L571.7 594.8L591.3 590.4L610.9 586.2L630.5 582.1L650.0 577.8L669.4 573.0L688.8 568.4L708.2 564.1L727.3 559.0L747.4 559.2L767.4 559.8L787.5 560.5L807.5 561.1M205.0 667.1L225.6 666.7L246.2 666.2L266.9 665.4L287.5 664.4L308.1 663.1L328.7 661.8L349.3 659.7L369.7 656.8L390.1 653.8L410.6 650.9L431.0 647.9L451.5 644.9L471.9 642.2L492.4 639.5L512.9 636.8L533.4 634.1L553.8 630.8L573.9 626.3L594.1 621.7L614.2 617.2L634.4 612.9L654.4 608.3L674.3 603.1L694.3 598.1L714.2 593.3L733.9 587.7L754.5 587.8L775.1 588.5L795.7 589.1L816.4 589.6M199.4 701.3L220.2 701.1L241.0 700.8L261.8 700.1L282.6 699.3L303.4 698.1L324.2 696.8L344.9 694.8L365.5 691.9L386.1 688.9L406.7 685.9L427.3 682.9L448.0 679.9L468.6 677.3L489.3 674.6L509.9 672.0L530.6 669.3L551.1 666.0L571.4 661.5L591.7 656.8L612.0 652.1L632.3 647.5L652.4 642.6L672.5 637.2L692.5 631.8L712.6 626.6L732.3 620.5L753.1 620.5L773.9 621.2L794.7 621.8L815.5 622.4M196.1 739.8L217.0 739.7L237.8 739.7L258.6 739.1L279.5 738.4L300.3 737.2L321.1 736.1L341.8 734.2L362.4 731.1L383.0 728.1L403.6 725.0L424.3 722.0L444.9 719.0L465.6 716.4L486.2 713.8L506.9 711.2L527.6 708.6L548.2 705.3L568.5 700.6L588.7 695.7L609.0 690.9L629.2 686.0L649.4 680.8L669.4 675.0L689.4 669.2L709.4 663.4L729.1 656.8L749.9 656.7L770.7 657.4L791.6 658.0L812.4 658.6" stroke="#848484" stroke-width="1" fill="none"/>
<path d="M206.0 254.0L380.0 237.0L497.0 219.0L521.0 216.6L580.0 215.0L637.0 220.0L683.0 224.0L693.0 241.5L707.0 269.0L717.0 296.0L726.0 332.0L730.0 361.0L734.0 385.0L736.0 416.0L749.0 447.0L763.0 480.0L790.0 527.0L810.0 566.0L816.5 577.0L816.0 620.0L813.0 635.0L812.0 673.0L777.0 672.0L746.0 671.0L729.0 671.0L709.0 678.0L640.0 698.5L552.0 720.0L536.0 723.0L440.0 735.0L332.0 751.0L275.0 754.0L237.0 755.0L195.0 755.0L197.0 728.0L200.0 695.0L205.0 667.0L212.0 640.0L217.0 620.0L222.5 589.0L225.4 577.0L224.5 548.0L221.6 509.0L218.0 486.0L211.0 459.0L206.0 431.0L202.0 401.0L201.6 382.0L205.0 346.0L207.0 305.0Z" stroke="#8a8a8a" stroke-width="1" fill="none"/>
<path d="M-1293.1 707.0L1889.7 232.1" stroke="#5a72e0" stroke-width="1" fill="none"/>
<path d="M582.3 974.2L299.3 -541.7" stroke="#f06040" stroke-width="1" fill="none"/>
</g>
</svg>
</div>
<div class="a" style="left:11px;top:13px;width:6.5px;height:6.5px;border-radius:50%;background:radial-gradient(circle at 65% 65%,#f8b030,#b07018 75%);box-shadow:0 0 0 1px #2a2d30"></div>
<div style="position:absolute;height:14px;top:9px;background:rgba(72,76,80,0.82);border:1px solid #2a2d30;border-radius:5px;color:#d6d6d6;text-align:center;line-height:11px;font-size:11px;left:23px;width:76px">Perspective</div>
<div style="position:absolute;height:14px;top:9px;background:rgba(72,76,80,0.82);border:1px solid #2a2d30;border-radius:5px;color:#d6d6d6;text-align:center;line-height:11px;font-size:11px;left:103px;width:105px">Default</div>
<div style="position:absolute;height:14px;top:9px;background:rgba(72,76,80,0.82);border:1px solid #2a2d30;border-radius:5px;color:#d6d6d6;text-align:center;line-height:11px;font-size:11px;left:211px;width:100px">Ray GL: Off</div>
<div style="position:absolute;height:14px;top:9px;background:rgba(72,76,80,0.82);border:1px solid #2a2d30;border-radius:5px;color:#d6d6d6;text-align:center;line-height:11px;font-size:11px;left:315px;width:100px">Viewport Textures</div>
<svg class="a" style="left:828px;top:4px" width="110" height="20" viewBox="828 4 110 20">
<path d="M832.5 15h12M838.5 9v12" stroke="#d8d8d8" stroke-width="1.3"/>
<path d="M838.5 7.5l-2.6 3h5.2zM838.5 22.5l-2.6-3h5.2zM831 15l3-2.6v5.2zM846 15l-3-2.6v5.2z" fill="#e0e0e0"/>
<path d="M862.5 10.2A5.6 5.6 0 1 0 863.8 17" stroke="#d8d8d8" stroke-width="1.3" fill="none"/>
<path d="M859.5 8l4.2 2.3-3.6 2.6z" fill="#e0e0e0"/>
<circle cx="877" cy="13.6" r="4.6" stroke="#d8d8d8" stroke-width="1.4" fill="none"/>
<path d="M880.3 17l4.6 4.8" stroke="#d0d0d0" stroke-width="1.8"/>
<path d="M892 15.5v6.5h6.5zM904.5 9.5h-6.5l6.5 6.5z" fill="#e8b418"/>
<path d="M895.5 18.5l5.5-5.5" stroke="#c89a18" stroke-width="1.6" stroke-dasharray="1.5 1"/>
<g transform="translate(913.5,14.5)">
<circle r="4.2" fill="#d0d0d0"/>
<g fill="#d0d0d0"><rect x="-1.3" y="-6.2" width="2.6" height="12.4"/><rect x="-6.2" y="-1.3" width="12.4" height="2.6"/>
<rect x="-1.3" y="-6.2" width="2.6" height="12.4" transform="rotate(45)"/><rect x="-1.3" y="-6.2" width="2.6" height="12.4" transform="rotate(-45)"/></g>
<circle r="1.6" fill="#3a3f44"/>
</g>
<path d="M928 10.5v9l5-4.5z" fill="#e0e0e0"/>
</svg>
<svg class="a" style="left:20px;top:805px" width="60" height="66" viewBox="20 805 60 66">
<path d="M60.4 836.2L30.4 840.3L34.5 867L65 862.2Z" fill="#4a4e52"/>
<path d="M30.4 840.3L34.5 867L65 862.2" stroke="#c8c8c8" stroke-width="1" fill="none"/>
<path d="M60.4 836.2L30.4 840.3" stroke="#3a6cf0" stroke-width="1.2" fill="none"/>
<path d="M60.4 836.2L60.4 823" stroke="#30c030" stroke-width="1.2" fill="none"/>
<path d="M60.4 836.2L65 862.2" stroke="#e83030" stroke-width="1.2" fill="none"/>
<path d="M29.5 831.5h4.5l-4.5 6.5h4.5" stroke="#3a6cf0" stroke-width="1" fill="none"/>
<path d="M60 813l2.5 4 2.5-4M62.5 817v4" stroke="#30c030" stroke-width="1" fill="none"/>
<path d="M64.5 854.5l5 7M69.5 854.5l-5 7" stroke="#e83030" stroke-width="1" fill="none"/>
</svg>
<div class="t" style="left:92px;top:850px;color:#d0d0d0;font-size:10.8px">Geometry Snap : Jitter</div>
<div class="t" style="right:297px;top:789px;color:#f0c040;text-align:right">All Vertices</div>
<div class="t" style="right:297px;top:804px;color:#d0d0d8;text-align:right">Polygons : Face</div>
<div class="t" style="right:297px;top:819px;color:#d0d0d8;text-align:right">Channels: 0</div>
<div class="t" style="right:297px;top:834px;color:#d0d0d8;text-align:right">Deformers: ON</div>
<div class="t" style="right:297px;top:849px;color:#d0d0d8;text-align:right">GL: 512</div>
<div class="t" style="right:297px;top:864px;color:#d0d0d8;text-align:right">50 mm</div>
<div class="a" style="left:284px;top:793px;width:386px;height:61px;background:rgba(42,44,46,0.86);border:1px solid #1c1d1e;border-radius:6px"></div>
<div class="a" style="left:285px;top:809px;width:384px;height:1px;background:#1e1f20"></div>
<div class="t" style="left:437px;top:794px;color:#c8c8c8;letter-spacing:0.05px">'Ctrl-Tab' to toggle</div>
<div class="a" style="left:298px;top:813px;width:37px;height:37px;background:#6a5232;border:1px solid #c07a28;border-radius:5px"></div>
<div class="a" style="left:489px;top:813px;width:1px;height:36px;background:#6a6a6a"></div>
<svg class="a" style="left:286px;top:812px" width="10" height="10"><path d="M2 2v6M3 4h5l-2 2h-3" stroke="#c8c8c8" stroke-width="1.2" fill="#c8c8c8"/></svg>
<svg class="a" style="left:491px;top:812px" width="10" height="10"><path d="M2 2v6M3 4h5l-2 2h-3" stroke="#c8c8c8" stroke-width="1.2" fill="#c8c8c8"/></svg>
<svg class="a" style="left:284px;top:810px" width="386" height="44" viewBox="284 810 386 44">
<defs>
<linearGradient id="gb" x1="0" y1="0" x2="1" y2="1"><stop offset="0" stop-color="#d0e0f0"/><stop offset="1" stop-color="#90a8c0"/></linearGradient>
<linearGradient id="gc" x1="0" y1="0" x2="1" y2="1"><stop offset="0" stop-color="#b8c4d0"/><stop offset="1" stop-color="#7888a0"/></linearGradient>
<radialGradient id="gs" cx="0.35" cy="0.35" r="0.7"><stop offset="0" stop-color="#ffffff"/><stop offset="0.5" stop-color="#b8c8e0"/><stop offset="1" stop-color="#7080a0"/></radialGradient>
</defs>
<!-- icon1 twisted grid -->
<path d="M306.2 819.7Q316 821 325.1 821.7Q321 832 320.8 844Q312 841 303.7 838.7Q307 829 306.2 819.7Z" fill="url(#gb)"/>
<path d="M312 820.5Q309 830 310 840.5M318.5 821.3Q315 832 315.5 842.2M305 826Q315 828 323.5 828M304.5 832Q313 834 322 836" stroke="#7890a8" stroke-width="0.9" fill="none"/>
<path d="M320.8 844L327 838L325.1 821.7" fill="#4a3a20" opacity="0.5"/>
<!-- icon2 cubes -->
<path d="M340.5 820L344 818.3L354.8 818.5L354.8 828.5L351 830.4L340.5 830Z" fill="url(#gc)"/>
<path d="M347.5 826L351 823.6L366.9 824L366.9 841L363 846L347.5 845Z" fill="url(#gb)" stroke="#7a70a8" stroke-width="0.8"/>
<path d="M347.5 826L363 827L366.9 824M363 827V846M355.5 826.5V845.5M347.5 835.5L363 836.5L366.9 833M358 824.5L354 826.5" stroke="#7a70a8" stroke-width="0.8" fill="none"/>
<!-- icon3 plane -->
<path d="M376 831.5L391 824.6L405.3 826.5L400 837.7Z" fill="#b0c8e0"/>
<path d="M376 831.5L400 837.7" stroke="#5a6a7a" stroke-width="0.8"/>
<circle cx="399" cy="838" r="5.6" fill="#2c2c2c"/>
<path d="M399 834.8v6.4M395.8 838h6.4" stroke="#f0c020" stroke-width="2"/>
<!-- icon4 curved grid -->
<path d="M417 818Q421 822 427 818.5L428 826L420 830.4Q416 825 417 818Z" fill="#a0b0c0" stroke="#7a78a0" stroke-width="0.7"/>
<path d="M422.6 825Q432 823 442 825Q441 836 441.5 843Q431 845 424 843.5Q423 834 422.6 825Z" fill="url(#gc)" stroke="#6a6890" stroke-width="0.8"/>
<path d="M429 824.5Q428 834 430 844.2M435.5 824.2Q434.5 834 435.5 844M423 831.5Q432 830 441.5 831.5M423.5 837.5Q432 836.5 441.5 837.5" stroke="#6a6890" stroke-width="0.8" fill="none"/>
<!-- icon5 cube + sphere -->
<path d="M454.2 820L457 818.3L468.8 818.5L468.8 829L465 830.9L454.2 830.5Z" fill="url(#gc)"/>
<circle cx="469.8" cy="833.8" r="9.2" fill="url(#gs)" stroke="#6a6890" stroke-width="0.8"/>
<path d="M461 833L466 830.5L472 829.5L477 834L475 840M466 830.5L467 838L475 840M467 838L462.5 838.5" stroke="#6a6890" stroke-width="0.7" fill="none"/>
<!-- separator and pins -->
<path d="M288 815v6M289 816.5h4l-1 1.5h-3" stroke="#c8c8c8" stroke-width="1" fill="#c8c8c8"/>
<path d="M492.5 815.5v5.5M493.5 816.5h4l-1 1.5h-3" stroke="#c8c8c8" stroke-width="1" fill="#c8c8c8"/>
<!-- icon6 gizmo -->
<circle cx="517.4" cy="832.4" r="11" fill="#454a50" opacity="0.7"/>
<path d="M506 838A12 12 0 0 1 517.5 821" stroke="#c05858" stroke-width="1.3" fill="none"/>
<path d="M517.5 821A12 12 0 0 1 528 838" stroke="#8890c0" stroke-width="1.3" fill="none"/>
<path d="M506 838Q517 843 528 838" stroke="#40b040" stroke-width="1.8" fill="none"/>
<path d="M517.4 832.4V822M517.4 832.4L507 837.5M517.4 832.4L527 837" stroke="#a0a8b0" stroke-width="1.2"/>
<rect x="515" y="816.3" width="5.8" height="5" fill="#50a050"/>
<path d="M503.8 836l2-1.5h3.2v4.5l-2 1.6h-3.2z" fill="#8898c0"/>
<path d="M525.6 835l4.4-0.7v5.8l-4.4 0.5z" fill="#c05050"/>
<!-- icon7 bevel cube -->
<path d="M542.5 822L550 819.6L570.8 826.5L565 838L557 842.9L546 839Z" fill="url(#gc)" stroke="#5a6078" stroke-width="0.7"/>
<path d="M542.5 822L557.5 831L570.8 826.5M557.5 831L557 842.9" stroke="#5a6078" stroke-width="0.7" fill="none"/>
<path d="M557.5 831L570.8 826.5" stroke="#d8a030" stroke-width="1.3"/>
<path d="M547.6 836.5L556 838.5L556.5 835.8L562.3 840.5L555 843.4L555.5 840.7L547 839.5Z" fill="#40a060"/>
<!-- icon8 extrude -->
<path d="M579.3 831L590 828.5L600 830L607.7 841L600 844.6L581 844Z" fill="#8a98b0" stroke="#5a6078" stroke-width="0.7"/>
<path d="M590 828.5L599 828.8L602 834L594 834.3Z" fill="#d0a040"/>
<path d="M579.3 831L594 834.3L602 834M594 834.3V844.5" stroke="#5a6078" stroke-width="0.7" fill="none"/>
<path d="M598 826.5L602 822L600.5 821L605.4 816.8L605 822.5L603.5 821.5L599.5 827.5Z" fill="#40a060"/>
<!-- icon9 cube + cone -->
<path d="M617.9 824.5L628 820.8L638 823L640 834L632 844L620.5 839Z" fill="url(#gc)" stroke="#5a6078" stroke-width="0.7"/>
<path d="M617.9 824.5L629 828L638 823M629 828L632 844" stroke="#5a6078" stroke-width="0.7" fill="none"/>
<path d="M634.3 823.5L645.6 820.8L638 831Z" fill="#40a060"/>
<!-- plus -->
<path d="M658.5 824.2V837.2M651.9 830.7H665" stroke="#ffffff" stroke-width="2.2"/>
</svg>
<div class="a" style="left:952px;top:2px;width:281px;height:872px;background:#474747"></div>
<div class="a" style="left:1233px;top:0;width:1px;height:874px;background:#2f88e0"></div>
<div class="a" style="left:1234px;top:0;width:1px;height:874px;background:#4a4a4a"></div>
<div class="a" style="left:952px;top:2px;width:281px;height:20px;background:#282828"></div>
<div class="a" style="left:952px;top:22px;width:281px;height:1px;background:#5c5c5c"></div>
<div class="a" style="left:957px;top:10px;width:7px;height:7px;border-radius:50%;background:#0e0e0e;box-shadow:inset 1px 1px 1px #3a3a3a"></div>
<div class="a" style="left:970px;top:7px;width:53px;height:15px;background:#393939;border-radius:6px 6px 0 0"></div>
<div class="t" style="left:970px;top:9px;width:53px;text-align:center;color:#9aa2aa;font-size:11px">Items</div>
<div class="a" style="left:1026px;top:7px;width:52px;height:16px;background:#474747;border:1px solid #5c5c5c;border-bottom:none;border-radius:6px 6px 0 0"></div>
<div class="t" style="left:1026px;top:9px;width:52px;text-align:center;color:#f0a028;font-size:11px">Mesh ...</div>
<div class="a" style="left:1084px;top:7px;width:52px;height:15px;background:#393939;border-radius:6px 6px 0 0"></div>
<div class="t" style="left:1084px;top:9px;width:52px;text-align:center;color:#9aa2aa;font-size:11px">Shading</div>
<svg class="a" style="left:1185px;top:2px" width="48" height="20" viewBox="0 0 48 20">
<path d="M4 11.5v6.5h6.5l-2.3-2.3 1.8-1.8-2-2-1.8 1.8z" fill="#9a9a9a"/>
<path d="M16.5 5h-6.5l2.3 2.3-1.8 1.8 2 2 1.8-1.8 2.2 2.2z" fill="#9a9a9a"/>
<g transform="translate(26,11)"><circle r="4.3" fill="#a0a0a0"/>
<g fill="#a0a0a0"><rect x="-1.2" y="-6" width="2.4" height="12"/><rect x="-6" y="-1.2" width="12" height="2.4"/><rect x="-1.2" y="-6" width="2.4" height="12" transform="rotate(45)"/><rect x="-1.2" y="-6" width="2.4" height="12" transform="rotate(-45)"/></g>
<circle r="1.3" fill="#111"/></g>
<path d="M39 7v8l4.5-4z" fill="#9a9a9a"/>
</svg>
<svg class="a" style="left:1139px;top:10px" width="12" height="8"><path d="M1 1h9l-4.5 5z" fill="#a8a8a8"/></svg>
<div class="a" style="left:952px;top:23px;width:281px;height:218px;background:#474747;border-left:1px solid #5a5a5a"></div>
<div class="a" style="left:956px;top:26px;width:273px;height:108px;background:#474747;border-top:1px solid #5c5c5c;border-left:1px solid #5c5c5c;border-bottom:1px solid #262626;border-right:1px solid #333"></div>
<div class="a" style="left:960px;top:30px;width:265px;height:19px;background:#616161;border:1px solid #2c2c2c;border-radius:5px"></div>
<div class="t" style="left:965px;top:34px;color:#d8d8d8;font-size:10.8px">Untitled*</div>
<svg class="a" style="left:1210px;top:35px" width="12" height="8"><path d="M1 1h9l-4.5 5z" fill="#e0e0e0"/></svg>
<div class="a" style="left:960px;top:50px;width:265px;height:49px;background:#616161;border:1px solid #2c2c2c;border-radius:5px;overflow:hidden">
<div class="a" style="left:0;top:0;width:263px;height:34px;background:#8f979e;border-bottom:1px solid #2e2e2e"></div>
<div class="a" style="left:0;top:0;width:15px;height:34px;background:#607080"></div>
<div class="a" style="left:0;top:17px;width:61px;height:1px;background:#6d7780"></div>
<div class="a" style="left:15px;top:0;width:1px;height:34px;background:#55606a"></div>
<div class="a" style="left:16px;top:0;width:14px;height:34px;background:#9aa1a7"></div>
<div class="a" style="left:30px;top:0;width:15px;height:34px;background:#3e464e"></div>
<div class="a" style="left:60px;top:0;width:1px;height:34px;background:#6d7780"></div>
</div>
<div class="t" style="left:967.5px;top:54px;color:#dde4ea;font-size:10.5px">A</div>
<div class="t" style="left:967.5px;top:71px;color:#dde4ea;font-size:10.5px">B</div>
<div class="t" style="left:981px;top:54px;color:#7a8288;font-size:10.5px">1</div>
<div class="t" style="left:995px;top:54px;color:#f0a028;font-size:10.5px">2</div>
<div class="t" style="left:1009px;top:53px;color:#6a747c;font-size:12px">+</div>
<svg class="a" style="left:977px;top:71px" width="14" height="12" viewBox="0 0 14 12"><path d="M1.5 6.8L4 5.8L5 8.2L11.8 1.8L12.8 3L4.6 11.2Z" fill="#000"/></svg>
<div class="a" style="left:1089px;top:88px;width:6px;height:6px;border-radius:50%;background:#505050;box-shadow:inset 1px 1px 1px #333"></div>
<svg class="a" style="left:1006px;top:134px" width="10" height="6"><path d="M1 5l4-4 4 4z" fill="#5e5e5e"/></svg>
<div class="a" style="left:1069.0px;top:135px;width:2px;height:5px;background:#5e6270"></div>
<div class="a" style="left:1072.9px;top:135px;width:2px;height:5px;background:#5e6270"></div>
<div class="a" style="left:1076.8px;top:135px;width:2px;height:5px;background:#5e6270"></div>
<div class="a" style="left:1080.7px;top:135px;width:2px;height:5px;background:#5e6270"></div>
<div class="a" style="left:1084.6px;top:135px;width:2px;height:5px;background:#5e6270"></div>
<div class="a" style="left:1088.5px;top:135px;width:2px;height:5px;background:#5e6270"></div>
<div class="a" style="left:1092.4px;top:135px;width:2px;height:5px;background:#5e6270"></div>
<div class="a" style="left:1096.3px;top:135px;width:2px;height:5px;background:#5e6270"></div>
<div class="a" style="left:1100.2px;top:135px;width:2px;height:5px;background:#5e6270"></div>
<div class="a" style="left:1104.1px;top:135px;width:2px;height:5px;background:#5e6270"></div>
<div class="a" style="left:1108.0px;top:135px;width:2px;height:5px;background:#5e6270"></div>
<div class="a" style="left:1111.9px;top:135px;width:2px;height:5px;background:#5e6270"></div>
<div class="a" style="left:956px;top:141px;width:273px;height:100px;background:#474747;border-top:1px solid #5c5c5c;border-left:1px solid #5c5c5c;border-bottom:1px solid #262626;border-right:1px solid #333"></div>
<div class="a" style="left:960px;top:145px;width:112px;height:19px;background:#5c5c5c;border:1px solid #2c2c2c;border-radius:5px"></div>
<div class="a" style="left:1052px;top:146px;width:1px;height:17px;background:#3a3a3a"></div>
<div class="t" style="left:972px;top:149px;color:#d8d8d8;font-size:10.8px">Add Operator</div>
<svg class="a" style="left:1057px;top:150px" width="12" height="8"><path d="M1 1h9l-4.5 5z" fill="#e0e0e0"/></svg>
<svg class="a" style="left:1146px;top:144px" width="82" height="22" viewBox="1146 144 82 22">
<rect x="1148" y="146" width="16" height="17" rx="4" fill="#5a5a5a" stroke="#2a2a2a"/>
<rect x="1150" y="149" width="12" height="6" fill="#4c5260"/><rect x="1150" y="155" width="12" height="6" fill="#d2d2d2"/>
<rect x="1168" y="146" width="16" height="17" rx="4" fill="#f0a028" stroke="#2a2a2a"/>
<rect x="1170" y="149" width="12" height="6" fill="#6878a0"/><rect x="1170" y="155" width="12" height="6" fill="#d2d2d2"/>
<path d="M1170 149.5h12M1170 149v6M1182 149v6" stroke="#e8e8e8" stroke-width="0.8" stroke-dasharray="1.2 1"/>
<rect x="1188" y="146" width="16" height="17" rx="4" fill="#f0a028" stroke="#2a2a2a"/>
<path d="M1192 150h9.5M1192 159h9.5" stroke="#1e1e1e" stroke-width="1.4"/>
<path d="M1193 154.5h8.5" stroke="#e8e8e8" stroke-width="1.2"/>
<circle cx="1192.5" cy="150" r="1.4" fill="#1e1e1e"/><circle cx="1192.5" cy="159" r="1.4" fill="#1e1e1e"/><circle cx="1192.5" cy="154.5" r="1.3" fill="#e8e8e8"/>
<rect x="1207" y="146" width="17" height="17" rx="5" fill="#5a5a5a" stroke="#2a2a2a"/>
<path d="M1209.5 150h12l-5 6.5l-1.2 4.5l-0.8-4.5z" fill="#d0d0d0"/>
</svg>
<div class="a" style="left:960px;top:166px;width:266px;height:71px;background:#3c3c3c;border:1px solid #2c2c2c;border-radius:5px;overflow:hidden">
<div class="a" style="left:0;top:0;width:249px;height:18px;background:#627080;border-bottom:1px solid #4a5460"></div>
<div class="a" style="left:0;top:18px;width:249px;height:36px;background:#4f565e"></div>
<div class="a" style="left:0;top:54px;width:249px;height:16px;background:#8f979e"></div>
<div class="a" style="left:23px;top:0;width:1px;height:70px;background:#4a5460"></div>
<div class="a" style="left:224px;top:0;width:1px;height:70px;background:#4a5460"></div>
<div class="a" style="left:249px;top:0;width:15px;height:70px;background:#3c3c3c"></div>
<div class="a" style="left:249px;top:0;width:15px;height:16px;background:#555;border-radius:0 5px 5px 5px"></div>
</div>
<div class="a" style="left:1213px;top:171px;width:7px;height:7px;border-radius:50%;background:#464646"></div>
<div class="t" style="left:999px;top:170px;color:#c0c8d0;font-size:10.8px">Name</div>
<div class="t" style="left:1193px;top:170px;color:#c0c8d0;font-size:10.8px">#</div>
<svg class="a" style="left:964px;top:169px" width="14" height="11" viewBox="0 0 14 11"><path d="M1 5.5C3 1.5 11 1.5 13 5.5C11 9.5 3 9.5 1 5.5Z" fill="#2a2a2a" stroke="#000" stroke-width="1"/><circle cx="7" cy="5.3" r="2.6" fill="#000"/><circle cx="6" cy="4.6" r="0.9" fill="#fff"/></svg>
<svg class="a" style="left:964px;top:206px" width="14" height="11" viewBox="0 0 14 11"><path d="M1 5.5C3 1.5 11 1.5 13 5.5C11 9.5 3 9.5 1 5.5Z" fill="#2a2a2a" stroke="#000" stroke-width="1"/><circle cx="7" cy="5.3" r="2.6" fill="#000"/><circle cx="6" cy="4.6" r="0.9" fill="#fff"/></svg>
<svg class="a" style="left:985px;top:188px" width="40" height="34" viewBox="985 188 40 34"><path d="M987.5 190.5h7l-3.5 5z" fill="#8a9098"/><path d="M991.5 196v25" stroke="#a0a6ac" stroke-dasharray="1 1"/><path d="M992 211.5h6" stroke="#a0a6ac" stroke-dasharray="1 1"/><path d="M999.5 208.5h7l-3.5 5z" fill="#8a9098"/><path d="M1003.5 214v8" stroke="#a0a6ac" stroke-dasharray="1 1"/></svg>
<svg class="a" style="left:1008px;top:186px" width="15" height="15" viewBox="0 0 15 15"><path d="M1.5 3.5l6-2.5 6 2.5v7l-6 3.5-6-3.5z" fill="#98acc8"/><path d="M1.5 3.5l6 2.5 6-2.5-6-2.5z" fill="#d0dcea"/><path d="M7.5 6v8l6-3.5v-7z" fill="#6e86a8"/></svg>
<div class="t" style="left:1023px;top:188px;color:#f0a028;font-size:10.8px">Plane</div>
<svg class="a" style="left:1020px;top:205px" width="12" height="12" viewBox="-6 -6 12 12"><circle r="3.6" fill="none" stroke="#a8bcd0" stroke-width="1.6"/><g stroke="#a8bcd0" stroke-width="1.6"><path d="M0 -5.5v2M0 3.5v2M-5.5 0h2M3.5 0h2M-3.9 -3.9l1.4 1.4M2.5 2.5l1.4 1.4M-3.9 3.9l1.4 -1.4M2.5 -2.5l1.4 -1.4"/></g></svg>
<div class="t" style="left:1036px;top:206px;color:#f0a028;font-size:10.8px">Smooth <span style="color:#6a7480">(3)</span></div>
<div class="a" style="left:952px;top:241px;width:281px;height:3px;background:#474747"></div>
<div class="a" style="left:952px;top:244px;width:281px;height:20px;background:#282828"></div>
<div class="a" style="left:952px;top:264px;width:281px;height:1px;background:#5c5c5c"></div>
<div class="a" style="left:957px;top:252px;width:7px;height:7px;border-radius:50%;background:#0e0e0e;box-shadow:inset 1px 1px 1px #3a3a3a"></div>
<div class="a" style="left:970px;top:249px;width:60px;height:16px;background:#474747;border:1px solid #5c5c5c;border-bottom:none;border-radius:6px 6px 0 0"></div>
<div class="t" style="left:970px;top:251px;width:60px;text-align:center;color:#f0a028;font-size:11px">Properties</div>
<div class="a" style="left:1036px;top:249px;width:56px;height:15px;background:#393939;border-radius:6px 6px 0 0"></div>
<div class="t" style="left:1036px;top:251px;width:56px;text-align:center;color:#9aa2aa;font-size:11px">Channels</div>
<div class="a" style="left:1097px;top:249px;width:52px;height:15px;background:#393939;border-radius:6px 6px 0 0"></div>
<div class="t" style="left:1097px;top:251px;width:52px;text-align:center;color:#9aa2aa;font-size:11px">Lists</div>
<svg class="a" style="left:1185px;top:244px" width="48" height="20" viewBox="0 0 48 20">
<path d="M4 11.5v6.5h6.5l-2.3-2.3 1.8-1.8-2-2-1.8 1.8z" fill="#9a9a9a"/>
<path d="M16.5 5h-6.5l2.3 2.3-1.8 1.8 2 2 1.8-1.8 2.2 2.2z" fill="#9a9a9a"/>
<g transform="translate(26,11)"><circle r="4.3" fill="#a0a0a0"/>
<g fill="#a0a0a0"><rect x="-1.2" y="-6" width="2.4" height="12"/><rect x="-6" y="-1.2" width="12" height="2.4"/><rect x="-1.2" y="-6" width="2.4" height="12" transform="rotate(45)"/><rect x="-1.2" y="-6" width="2.4" height="12" transform="rotate(-45)"/></g>
<circle r="1.3" fill="#111"/></g>
<path d="M39 7v8l4.5-4z" fill="#9a9a9a"/>
</svg>
<div class="t" style="left:1152px;top:249px;color:#c8c8c8;font-size:13px">+</div>
<div class="a" style="left:952px;top:265px;width:281px;height:609px;background:#484848;border-left:1px solid #5a5a5a"></div>
<div class="t" style="right:189px;top:273px;color:#d8d8d8;text-align:right;font-size:10.5px">Name</div>
<div class="a" style="left:1050px;top:270px;width:156px;height:18px;background:#8f979e;border:1px solid #2a2a2a;border-radius:5px"></div>
<div class="t" style="left:1060px;top:274px;color:#141420;font-size:10.5px">Plane</div>
<div class="a" style="left:957px;top:291px;width:250px;height:16px;background:#3c3c3c;border-radius:5px"></div>
<svg class="a" style="left:961px;top:296px" width="8" height="7"><path d="M0.5 0.5h6l-3 5z" fill="#707070"/></svg>
<div class="t" style="left:972px;top:294px;color:#d8d8d8;font-size:10.5px">Mesh Operation</div>
<div class="t" style="right:189px;top:314px;color:#d8d8d8;text-align:right;font-size:10.5px">Name</div>
<div class="a" style="left:1050px;top:311px;width:156px;height:18px;background:#8f979e;border:1px solid #2a2a2a;border-radius:5px"></div>
<div class="t" style="left:1060px;top:315px;color:#141420;font-size:10.5px">Plane</div>
<div class="a" style="left:1050px;top:332px;width:34px;height:18px;background:#555;border:1px solid #2a2a2a;border-radius:5px;overflow:hidden">
<div class="a" style="left:14px;top:0;width:1px;height:16px;background:#3a3a3a"></div>
<div class="a" style="left:15px;top:0;width:18px;height:16px;background:#f0a028"></div>
<svg class="a" style="left:15px;top:0" width="18" height="16" viewBox="0 0 18 16"><path d="M3 9.3L5.2 8.3L6.3 11.2L14.3 4.3L15.4 5.6L6 14.3Z" fill="#000"/></svg>
</div>
<div class="a" style="left:1053px;top:335px;width:10px;height:10px;border-radius:50%;background:#525252;border:1px solid #444"></div>
<div class="t" style="left:1087px;top:336px;color:#d8d8d8;font-size:10.5px">Enable</div>
<div class="a" style="left:961px;top:355px;width:245px;height:1px;background:#5c5c5c"></div>
<div class="a" style="left:1050px;top:361px;width:34px;height:18px;background:#555;border:1px solid #2a2a2a;border-radius:5px;overflow:hidden">
<div class="a" style="left:14px;top:0;width:1px;height:16px;background:#3a3a3a"></div>
<div class="a" style="left:15px;top:0;width:18px;height:16px;background:#f0a028"></div>
<svg class="a" style="left:15px;top:0" width="18" height="16" viewBox="0 0 18 16"><path d="M3 9.3L5.2 8.3L6.3 11.2L14.3 4.3L15.4 5.6L6 14.3Z" fill="#000"/></svg>
</div>
<div class="a" style="left:1053px;top:364px;width:10px;height:10px;border-radius:50%;background:#525252;border:1px solid #444"></div>
<div class="t" style="left:1087px;top:365px;color:#d8d8d8;font-size:10.5px">Use World Transform</div>
<div class="a" style="left:961px;top:384px;width:245px;height:1px;background:#5c5c5c"></div>
<div class="t" style="right:189px;top:393px;color:#d8d8d8;text-align:right;font-size:10.5px">Strength</div>
<div class="a" style="left:1050px;top:389px;width:156px;height:19px;background:#8f979e;border:1px solid #2a2a2a;border-radius:5px;overflow:hidden">
<div class="a" style="left:0;top:0;width:14px;height:17px;background:#555"></div>
<div class="a" style="left:139px;top:0;width:1px;height:17px;background:#7a8288"></div>
</div>
<div class="a" style="left:1053px;top:392px;width:10px;height:10px;border-radius:50%;background:#a6a6a6;border:1px solid #333"></div>
<div class="t" style="left:1076px;top:393px;color:#141420;font-size:10.5px">100.0 %</div>
<svg class="a" style="left:1191px;top:394px" width="13" height="9"><path d="M4.5 0.5v8l-4-4zM8.5 0.5v8l4-4z" fill="#dde0e2"/><path d="M6.5 0v9" stroke="#dde0e2"/></svg>
<div class="t" style="right:189px;top:414px;color:#d8d8d8;text-align:right;font-size:10.5px">Iterations</div>
<div class="a" style="left:1050px;top:410px;width:156px;height:19px;background:#8f979e;border:1px solid #2a2a2a;border-radius:5px;overflow:hidden">
<div class="a" style="left:0;top:0;width:14px;height:17px;background:#555"></div>
<div class="a" style="left:139px;top:0;width:1px;height:17px;background:#7a8288"></div>
</div>
<div class="a" style="left:1053px;top:413px;width:10px;height:10px;border-radius:50%;background:#a6a6a6;border:1px solid #333"></div>
<div class="t" style="left:1076px;top:414px;color:#141420;font-size:10.5px">333</div>
<svg class="a" style="left:1191px;top:415px" width="13" height="9"><path d="M4.5 0.5v8l-4-4zM8.5 0.5v8l4-4z" fill="#dde0e2"/><path d="M6.5 0v9" stroke="#dde0e2"/></svg>
<div class="a" style="left:1050px;top:431px;width:34px;height:18px;background:#555;border:1px solid #2a2a2a;border-radius:5px;overflow:hidden">
<div class="a" style="left:14px;top:0;width:1px;height:16px;background:#3a3a3a"></div>
</div>
<div class="a" style="left:1053px;top:434px;width:10px;height:10px;border-radius:50%;background:#a6a6a6;border:1px solid #333"></div>
<div class="t" style="left:1087px;top:435px;color:#d8d8d8;font-size:10.5px">Lock Boundary</div>
<div class="a" style="left:1050px;top:452px;width:34px;height:18px;background:#555;border:1px solid #2a2a2a;border-radius:5px;overflow:hidden">
<div class="a" style="left:14px;top:0;width:1px;height:16px;background:#3a3a3a"></div>
<div class="a" style="left:15px;top:0;width:18px;height:16px;background:#f0a028"></div>
<svg class="a" style="left:15px;top:0" width="18" height="16" viewBox="0 0 18 16"><path d="M3 9.3L5.2 8.3L6.3 11.2L14.3 4.3L15.4 5.6L6 14.3Z" fill="#000"/></svg>
</div>
<div class="a" style="left:1053px;top:455px;width:10px;height:10px;border-radius:50%;background:#a6a6a6;border:1px solid #333"></div>
<div class="t" style="left:1087px;top:456px;color:#d8d8d8;font-size:10.5px">Lock Corner</div>
<div class="a" style="left:1050px;top:473px;width:34px;height:18px;background:#555;border:1px solid #2a2a2a;border-radius:5px;overflow:hidden">
<div class="a" style="left:14px;top:0;width:1px;height:16px;background:#3a3a3a"></div>
</div>
<div class="a" style="left:1053px;top:476px;width:10px;height:10px;border-radius:50%;background:#a6a6a6;border:1px solid #333"></div>
<div class="t" style="left:1087px;top:477px;color:#d8d8d8;font-size:10.5px">Lock Sharp Edges</div>
<div class="t" style="right:189px;top:498px;color:#d8d8d8;text-align:right;font-size:10.5px">Sharp Angle</div>
<div class="a" style="left:1050px;top:494px;width:156px;height:19px;background:#8f979e;border:1px solid #2a2a2a;border-radius:5px;overflow:hidden">
<div class="a" style="left:0;top:0;width:14px;height:17px;background:#555"></div>
<div class="a" style="left:139px;top:0;width:1px;height:17px;background:#7a8288"></div>
</div>
<div class="a" style="left:1053px;top:497px;width:10px;height:10px;border-radius:50%;background:#a6a6a6;border:1px solid #333"></div>
<div class="t" style="left:1076px;top:498px;color:#141420;font-size:10.5px">55.0 &deg;</div>
<svg class="a" style="left:1191px;top:499px" width="13" height="9"><path d="M4.5 0.5v8l-4-4zM8.5 0.5v8l4-4z" fill="#dde0e2"/><path d="M6.5 0v9" stroke="#dde0e2"/></svg>
<div class="a" style="left:1210px;top:268px;width:19px;height:520px;background:#5a5a5a;border:1px solid #3a3a3a;border-radius:6px"></div>
<div class="a" style="left:1211px;top:356px;width:17px;height:1px;background:#474747"></div>
<div class="t" style="left:1211px;top:273px;width:17px;height:84px;color:#c8ccd0;writing-mode:vertical-rl;text-align:start;line-height:17px;font-size:10.5px">Select By Index</div>
<div class="a" style="left:1211px;top:357px;width:17px;height:52px;background:#f0a028;border-radius:3px"></div>
<div class="t" style="left:1211px;top:361px;width:17px;height:48px;color:#000;writing-mode:vertical-rl;text-align:start;line-height:17px;font-size:10.5px">Smooth</div>
<div class="a" style="left:1211px;top:452px;width:17px;height:1px;background:#474747"></div>
<div class="t" style="left:1211px;top:413px;width:17px;height:40px;color:#c8ccd0;writing-mode:vertical-rl;text-align:start;line-height:17px;font-size:10.5px">Mesh</div>
<div class="a" style="left:1211px;top:505px;width:17px;height:1px;background:#474747"></div>
<div class="t" style="left:1211px;top:457px;width:17px;height:49px;color:#c8ccd0;writing-mode:vertical-rl;text-align:start;line-height:17px;font-size:10.5px">Surface</div>
<div class="a" style="left:1211px;top:550px;width:17px;height:1px;background:#474747"></div>
<div class="t" style="left:1211px;top:510px;width:17px;height:41px;color:#c8ccd0;writing-mode:vertical-rl;text-align:start;line-height:17px;font-size:10.5px">Curve</div>
<div class="a" style="left:1211px;top:599px;width:17px;height:1px;background:#474747"></div>
<div class="t" style="left:1211px;top:555px;width:17px;height:45px;color:#c8ccd0;writing-mode:vertical-rl;text-align:start;line-height:17px;font-size:10.5px">Display</div>
<div class="a" style="left:1211px;top:660px;width:17px;height:1px;background:#474747"></div>
<div class="t" style="left:1211px;top:604px;width:17px;height:57px;color:#c8ccd0;writing-mode:vertical-rl;text-align:start;line-height:17px;font-size:10.5px">Assembly</div>
<div class="a" style="left:1211px;top:744px;width:17px;height:1px;background:#474747"></div>
<div class="t" style="left:1211px;top:665px;width:17px;height:80px;color:#c8ccd0;writing-mode:vertical-rl;text-align:start;line-height:17px;font-size:10.5px">User Channels</div>
<div class="a" style="left:1211px;top:786px;width:17px;height:1px;background:#474747"></div>
<div class="t" style="left:1211px;top:749px;width:17px;height:38px;color:#c8ccd0;writing-mode:vertical-rl;text-align:start;line-height:17px;font-size:10.5px">Tags</div>
</body></html>
